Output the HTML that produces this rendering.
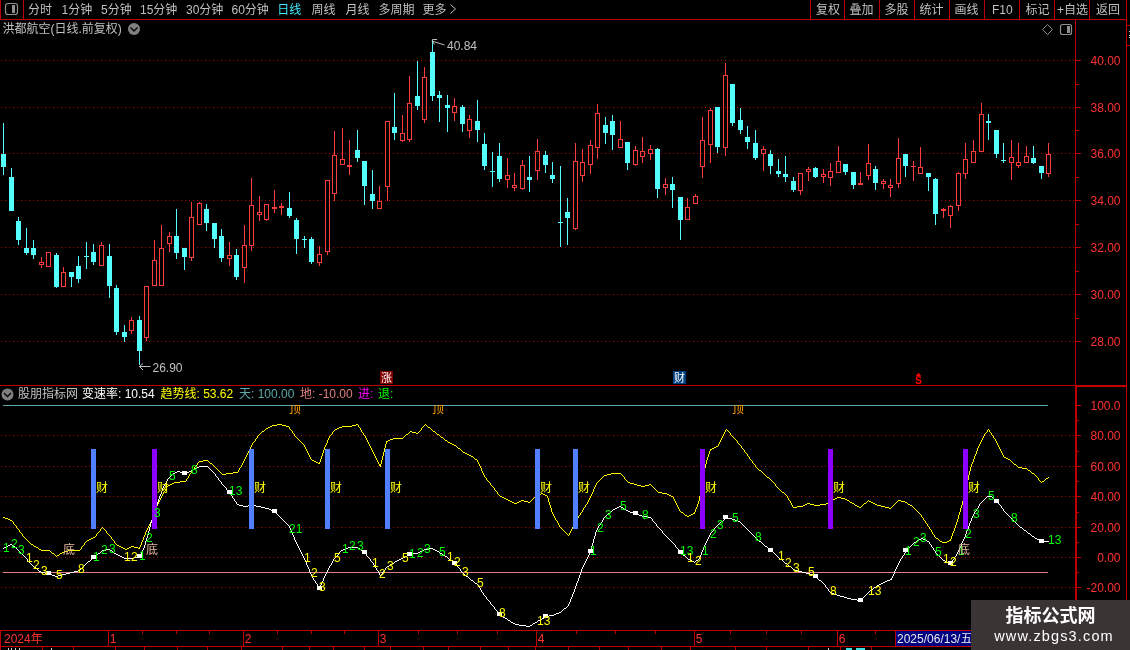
<!DOCTYPE html>
<html lang="zh"><head><meta charset="utf-8"><title>洪都航空 日线</title>
<style>html,body{margin:0;padding:0;background:#000;overflow:hidden}body{width:1130px;height:650px;position:relative}svg{position:absolute;left:0;top:0;display:block;will-change:transform}text{font-family:"Liberation Sans","Noto Sans CJK SC",sans-serif;font-size:12px;white-space:pre}.c{shape-rendering:crispEdges}</style></head><body>
<svg width="1130" height="650" viewBox="0 0 1130 650">
<rect width="1130" height="650" fill="#000"/>
<line class="c" x1="1" x2="1075" y1="60.5" y2="60.5" stroke="#b40000" stroke-width="1" stroke-dasharray="1 3"/>
<line class="c" x1="1" x2="1075" y1="107.5" y2="107.5" stroke="#b40000" stroke-width="1" stroke-dasharray="1 3"/>
<line class="c" x1="1" x2="1075" y1="153.5" y2="153.5" stroke="#b40000" stroke-width="1" stroke-dasharray="1 3"/>
<line class="c" x1="1" x2="1075" y1="200.5" y2="200.5" stroke="#b40000" stroke-width="1" stroke-dasharray="1 3"/>
<line class="c" x1="1" x2="1075" y1="247.5" y2="247.5" stroke="#b40000" stroke-width="1" stroke-dasharray="1 3"/>
<line class="c" x1="1" x2="1075" y1="294.5" y2="294.5" stroke="#b40000" stroke-width="1" stroke-dasharray="1 3"/>
<line class="c" x1="1" x2="1075" y1="341.5" y2="341.5" stroke="#b40000" stroke-width="1" stroke-dasharray="1 3"/>
<line class="c" x1="1" x2="1075" y1="435.5" y2="435.5" stroke="#b40000" stroke-width="1" stroke-dasharray="1 3"/>
<line class="c" x1="1" x2="1075" y1="466.5" y2="466.5" stroke="#b40000" stroke-width="1" stroke-dasharray="1 3"/>
<line class="c" x1="1" x2="1075" y1="496.5" y2="496.5" stroke="#b40000" stroke-width="1" stroke-dasharray="1 3"/>
<line class="c" x1="1" x2="1075" y1="527.5" y2="527.5" stroke="#b40000" stroke-width="1" stroke-dasharray="1 3"/>
<line class="c" x1="1" x2="1075" y1="557.5" y2="557.5" stroke="#b40000" stroke-width="1" stroke-dasharray="1 3"/>
<line class="c" x1="1" x2="1075" y1="587.5" y2="587.5" stroke="#b40000" stroke-width="1" stroke-dasharray="1 3"/>
<!--CANDLES-->
<rect class="c" x="3" y="123" width="1" height="52" fill="#54ffff"/>
<rect class="c" x="1" y="154" width="5" height="13" fill="#54ffff"/>
<rect class="c" x="11" y="168" width="1" height="43" fill="#54ffff"/>
<rect class="c" x="9" y="177" width="5" height="34" fill="#54ffff"/>
<rect class="c" x="18" y="217" width="1" height="28" fill="#54ffff"/>
<rect class="c" x="16" y="221" width="5" height="19" fill="#54ffff"/>
<rect class="c" x="26" y="228" width="1" height="27" fill="#54ffff"/>
<rect class="c" x="24" y="248" width="5" height="5" fill="#54ffff"/>
<rect class="c" x="33" y="240" width="1" height="19" fill="#54ffff"/>
<rect class="c" x="31" y="248" width="5" height="7" fill="#54ffff"/>
<rect class="c" x="41" y="257" width="1" height="5" fill="#ff3c3c"/>
<rect class="c" x="41" y="265" width="1" height="3" fill="#ff3c3c"/>
<rect class="c" x="39.5" y="262.5" width="4" height="2" fill="none" stroke="#ff3c3c" stroke-width="1"/>
<rect class="c" x="46.5" y="252.5" width="4" height="14" fill="none" stroke="#ff3c3c" stroke-width="1"/>
<rect class="c" x="56" y="253" width="1" height="35" fill="#54ffff"/>
<rect class="c" x="54" y="255" width="5" height="32" fill="#54ffff"/>
<rect class="c" x="63" y="267" width="1" height="5" fill="#ff3c3c"/>
<rect class="c" x="61.5" y="272.5" width="4" height="14" fill="none" stroke="#ff3c3c" stroke-width="1"/>
<rect class="c" x="71" y="272" width="1" height="15" fill="#54ffff"/>
<rect class="c" x="69" y="272" width="5" height="5" fill="#54ffff"/>
<rect class="c" x="78" y="256" width="1" height="27" fill="#54ffff"/>
<rect class="c" x="76" y="266" width="5" height="13" fill="#54ffff"/>
<rect class="c" x="86" y="242" width="1" height="27" fill="#54ffff"/>
<rect class="c" x="84" y="256" width="5" height="1" fill="#54ffff"/>
<rect class="c" x="93" y="244" width="1" height="21" fill="#54ffff"/>
<rect class="c" x="91" y="252" width="5" height="10" fill="#54ffff"/>
<rect class="c" x="101" y="242" width="1" height="3" fill="#ff3c3c"/>
<rect class="c" x="99.5" y="245.5" width="4" height="20" fill="none" stroke="#ff3c3c" stroke-width="1"/>
<rect class="c" x="109" y="244" width="1" height="54" fill="#54ffff"/>
<rect class="c" x="107" y="256" width="5" height="30" fill="#54ffff"/>
<rect class="c" x="116" y="285" width="1" height="50" fill="#54ffff"/>
<rect class="c" x="114" y="288" width="5" height="44" fill="#54ffff"/>
<rect class="c" x="124" y="325" width="1" height="17" fill="#54ffff"/>
<rect class="c" x="122" y="332" width="5" height="5" fill="#54ffff"/>
<rect class="c" x="131" y="317" width="1" height="3" fill="#ff3c3c"/>
<rect class="c" x="131" y="331" width="1" height="3" fill="#ff3c3c"/>
<rect class="c" x="129.5" y="320.5" width="4" height="10" fill="none" stroke="#ff3c3c" stroke-width="1"/>
<rect class="c" x="139" y="316" width="1" height="49" fill="#54ffff"/>
<rect class="c" x="137" y="320" width="5" height="31" fill="#54ffff"/>
<rect class="c" x="146" y="338" width="1" height="3" fill="#ff3c3c"/>
<rect class="c" x="144.5" y="286.5" width="4" height="51" fill="none" stroke="#ff3c3c" stroke-width="1"/>
<rect class="c" x="154" y="240" width="1" height="20" fill="#ff3c3c"/>
<rect class="c" x="152.5" y="260.5" width="4" height="25" fill="none" stroke="#ff3c3c" stroke-width="1"/>
<rect class="c" x="161" y="225" width="1" height="23" fill="#ff3c3c"/>
<rect class="c" x="159.5" y="248.5" width="4" height="37" fill="none" stroke="#ff3c3c" stroke-width="1"/>
<rect class="c" x="169" y="232" width="1" height="4" fill="#ff3c3c"/>
<rect class="c" x="169" y="244" width="1" height="8" fill="#ff3c3c"/>
<rect class="c" x="167.5" y="236.5" width="4" height="7" fill="none" stroke="#ff3c3c" stroke-width="1"/>
<rect class="c" x="176" y="209" width="1" height="50" fill="#54ffff"/>
<rect class="c" x="174" y="236" width="5" height="17" fill="#54ffff"/>
<rect class="c" x="184" y="248" width="1" height="22" fill="#54ffff"/>
<rect class="c" x="182" y="248" width="5" height="9" fill="#54ffff"/>
<rect class="c" x="191" y="202" width="1" height="15" fill="#ff3c3c"/>
<rect class="c" x="191" y="258" width="1" height="3" fill="#ff3c3c"/>
<rect class="c" x="189.5" y="217.5" width="4" height="40" fill="none" stroke="#ff3c3c" stroke-width="1"/>
<rect class="c" x="199" y="202" width="1" height="1" fill="#ff3c3c"/>
<rect class="c" x="197.5" y="203.5" width="4" height="21" fill="none" stroke="#ff3c3c" stroke-width="1"/>
<rect class="c" x="206" y="204" width="1" height="27" fill="#54ffff"/>
<rect class="c" x="204" y="209" width="5" height="14" fill="#54ffff"/>
<rect class="c" x="214" y="223" width="1" height="25" fill="#54ffff"/>
<rect class="c" x="212" y="223" width="5" height="16" fill="#54ffff"/>
<rect class="c" x="221" y="229" width="1" height="33" fill="#54ffff"/>
<rect class="c" x="219" y="236" width="5" height="22" fill="#54ffff"/>
<rect class="c" x="229" y="242" width="1" height="13" fill="#ff3c3c"/>
<rect class="c" x="229" y="259" width="1" height="7" fill="#ff3c3c"/>
<rect class="c" x="227.5" y="255.5" width="4" height="3" fill="none" stroke="#ff3c3c" stroke-width="1"/>
<rect class="c" x="236" y="249" width="1" height="31" fill="#54ffff"/>
<rect class="c" x="234" y="255" width="5" height="22" fill="#54ffff"/>
<rect class="c" x="244" y="225" width="1" height="20" fill="#ff3c3c"/>
<rect class="c" x="244" y="268" width="1" height="15" fill="#ff3c3c"/>
<rect class="c" x="242.5" y="245.5" width="4" height="22" fill="none" stroke="#ff3c3c" stroke-width="1"/>
<rect class="c" x="251" y="178" width="1" height="27" fill="#ff3c3c"/>
<rect class="c" x="251" y="246" width="1" height="5" fill="#ff3c3c"/>
<rect class="c" x="249.5" y="205.5" width="4" height="40" fill="none" stroke="#ff3c3c" stroke-width="1"/>
<rect class="c" x="259" y="196" width="1" height="16" fill="#ff3c3c"/>
<rect class="c" x="259" y="215" width="1" height="6" fill="#ff3c3c"/>
<rect class="c" x="257.5" y="212.5" width="4" height="2" fill="none" stroke="#ff3c3c" stroke-width="1"/>
<rect class="c" x="266" y="220" width="1" height="1" fill="#ff3c3c"/>
<rect class="c" x="264.5" y="204.5" width="4" height="15" fill="none" stroke="#ff3c3c" stroke-width="1"/>
<rect class="c" x="274" y="190" width="1" height="23" fill="#ff3c3c"/>
<rect class="c" x="272" y="207" width="5" height="2" fill="#ff3c3c"/>
<rect class="c" x="281" y="203" width="1" height="12" fill="#ff3c3c"/>
<rect class="c" x="279" y="206" width="5" height="2" fill="#ff3c3c"/>
<rect class="c" x="289" y="192" width="1" height="26" fill="#54ffff"/>
<rect class="c" x="287" y="208" width="5" height="8" fill="#54ffff"/>
<rect class="c" x="296" y="218" width="1" height="36" fill="#54ffff"/>
<rect class="c" x="294" y="220" width="5" height="19" fill="#54ffff"/>
<rect class="c" x="304" y="236" width="1" height="12" fill="#54ffff"/>
<rect class="c" x="302" y="239" width="5" height="1" fill="#54ffff"/>
<rect class="c" x="311" y="237" width="1" height="27" fill="#54ffff"/>
<rect class="c" x="309" y="239" width="5" height="23" fill="#54ffff"/>
<rect class="c" x="319" y="246" width="1" height="8" fill="#ff3c3c"/>
<rect class="c" x="319" y="263" width="1" height="3" fill="#ff3c3c"/>
<rect class="c" x="317.5" y="254.5" width="4" height="8" fill="none" stroke="#ff3c3c" stroke-width="1"/>
<rect class="c" x="327" y="252" width="1" height="3" fill="#ff3c3c"/>
<rect class="c" x="325.5" y="180.5" width="4" height="71" fill="none" stroke="#ff3c3c" stroke-width="1"/>
<rect class="c" x="334" y="131" width="1" height="24" fill="#ff3c3c"/>
<rect class="c" x="334" y="194" width="1" height="7" fill="#ff3c3c"/>
<rect class="c" x="332.5" y="155.5" width="4" height="38" fill="none" stroke="#ff3c3c" stroke-width="1"/>
<rect class="c" x="342" y="128" width="1" height="31" fill="#ff3c3c"/>
<rect class="c" x="340.5" y="159.5" width="4" height="5" fill="none" stroke="#ff3c3c" stroke-width="1"/>
<rect class="c" x="349" y="140" width="1" height="35" fill="#ff3c3c"/>
<rect class="c" x="347" y="165" width="5" height="2" fill="#ff3c3c"/>
<rect class="c" x="357" y="130" width="1" height="32" fill="#54ffff"/>
<rect class="c" x="355" y="150" width="5" height="8" fill="#54ffff"/>
<rect class="c" x="364" y="161" width="1" height="44" fill="#54ffff"/>
<rect class="c" x="362" y="161" width="5" height="25" fill="#54ffff"/>
<rect class="c" x="372" y="170" width="1" height="39" fill="#54ffff"/>
<rect class="c" x="370" y="194" width="5" height="7" fill="#54ffff"/>
<rect class="c" x="379" y="186" width="1" height="15" fill="#ff3c3c"/>
<rect class="c" x="377.5" y="201.5" width="4" height="7" fill="none" stroke="#ff3c3c" stroke-width="1"/>
<rect class="c" x="387" y="187" width="1" height="14" fill="#ff3c3c"/>
<rect class="c" x="385.5" y="121.5" width="4" height="65" fill="none" stroke="#ff3c3c" stroke-width="1"/>
<rect class="c" x="394" y="93" width="1" height="47" fill="#54ffff"/>
<rect class="c" x="392" y="127" width="5" height="6" fill="#54ffff"/>
<rect class="c" x="402" y="115" width="1" height="18" fill="#ff3c3c"/>
<rect class="c" x="402" y="141" width="1" height="1" fill="#ff3c3c"/>
<rect class="c" x="400.5" y="133.5" width="4" height="7" fill="none" stroke="#ff3c3c" stroke-width="1"/>
<rect class="c" x="409" y="76" width="1" height="27" fill="#ff3c3c"/>
<rect class="c" x="409" y="140" width="1" height="2" fill="#ff3c3c"/>
<rect class="c" x="407.5" y="103.5" width="4" height="36" fill="none" stroke="#ff3c3c" stroke-width="1"/>
<rect class="c" x="417" y="61" width="1" height="49" fill="#54ffff"/>
<rect class="c" x="415" y="96" width="5" height="10" fill="#54ffff"/>
<rect class="c" x="424" y="67" width="1" height="10" fill="#ff3c3c"/>
<rect class="c" x="424" y="120" width="1" height="3" fill="#ff3c3c"/>
<rect class="c" x="422.5" y="77.5" width="4" height="42" fill="none" stroke="#ff3c3c" stroke-width="1"/>
<rect class="c" x="432" y="40" width="1" height="61" fill="#54ffff"/>
<rect class="c" x="430" y="52" width="5" height="44" fill="#54ffff"/>
<rect class="c" x="439" y="91" width="1" height="31" fill="#54ffff"/>
<rect class="c" x="437" y="95" width="5" height="3" fill="#54ffff"/>
<rect class="c" x="447" y="95" width="1" height="37" fill="#54ffff"/>
<rect class="c" x="445" y="105" width="5" height="3" fill="#54ffff"/>
<rect class="c" x="454" y="98" width="1" height="8" fill="#ff3c3c"/>
<rect class="c" x="454" y="113" width="1" height="8" fill="#ff3c3c"/>
<rect class="c" x="452.5" y="106.5" width="4" height="6" fill="none" stroke="#ff3c3c" stroke-width="1"/>
<rect class="c" x="462" y="105" width="1" height="27" fill="#54ffff"/>
<rect class="c" x="460" y="107" width="5" height="17" fill="#54ffff"/>
<rect class="c" x="469" y="115" width="1" height="4" fill="#ff3c3c"/>
<rect class="c" x="469" y="131" width="1" height="7" fill="#ff3c3c"/>
<rect class="c" x="467.5" y="119.5" width="4" height="11" fill="none" stroke="#ff3c3c" stroke-width="1"/>
<rect class="c" x="477" y="100" width="1" height="42" fill="#54ffff"/>
<rect class="c" x="475" y="121" width="5" height="9" fill="#54ffff"/>
<rect class="c" x="484" y="133" width="1" height="37" fill="#54ffff"/>
<rect class="c" x="482" y="144" width="5" height="22" fill="#54ffff"/>
<rect class="c" x="492" y="152" width="1" height="35" fill="#54ffff"/>
<rect class="c" x="490" y="171" width="5" height="1" fill="#54ffff"/>
<rect class="c" x="499" y="143" width="1" height="39" fill="#54ffff"/>
<rect class="c" x="497" y="156" width="5" height="23" fill="#54ffff"/>
<rect class="c" x="507" y="158" width="1" height="17" fill="#ff3c3c"/>
<rect class="c" x="507" y="180" width="1" height="8" fill="#ff3c3c"/>
<rect class="c" x="505.5" y="175.5" width="4" height="4" fill="none" stroke="#ff3c3c" stroke-width="1"/>
<rect class="c" x="514" y="173" width="1" height="12" fill="#ff3c3c"/>
<rect class="c" x="514" y="188" width="1" height="3" fill="#ff3c3c"/>
<rect class="c" x="512.5" y="185.5" width="4" height="2" fill="none" stroke="#ff3c3c" stroke-width="1"/>
<rect class="c" x="522" y="160" width="1" height="5" fill="#ff3c3c"/>
<rect class="c" x="522" y="189" width="1" height="1" fill="#ff3c3c"/>
<rect class="c" x="520.5" y="165.5" width="4" height="23" fill="none" stroke="#ff3c3c" stroke-width="1"/>
<rect class="c" x="529" y="156" width="1" height="36" fill="#54ffff"/>
<rect class="c" x="527" y="177" width="5" height="3" fill="#54ffff"/>
<rect class="c" x="537" y="139" width="1" height="12" fill="#ff3c3c"/>
<rect class="c" x="537" y="171" width="1" height="9" fill="#ff3c3c"/>
<rect class="c" x="535.5" y="151.5" width="4" height="19" fill="none" stroke="#ff3c3c" stroke-width="1"/>
<rect class="c" x="545" y="151" width="1" height="22" fill="#54ffff"/>
<rect class="c" x="543" y="155" width="5" height="10" fill="#54ffff"/>
<rect class="c" x="552" y="162" width="1" height="21" fill="#54ffff"/>
<rect class="c" x="550" y="175" width="5" height="4" fill="#54ffff"/>
<rect class="c" x="560" y="166" width="1" height="81" fill="#54ffff"/>
<rect class="c" x="558" y="222" width="5" height="1" fill="#54ffff"/>
<rect class="c" x="567" y="198" width="1" height="47" fill="#54ffff"/>
<rect class="c" x="565" y="212" width="5" height="6" fill="#54ffff"/>
<rect class="c" x="575" y="143" width="1" height="18" fill="#ff3c3c"/>
<rect class="c" x="575" y="229" width="1" height="1" fill="#ff3c3c"/>
<rect class="c" x="573.5" y="161.5" width="4" height="67" fill="none" stroke="#ff3c3c" stroke-width="1"/>
<rect class="c" x="582" y="149" width="1" height="13" fill="#ff3c3c"/>
<rect class="c" x="582" y="176" width="1" height="6" fill="#ff3c3c"/>
<rect class="c" x="580.5" y="162.5" width="4" height="13" fill="none" stroke="#ff3c3c" stroke-width="1"/>
<rect class="c" x="590" y="140" width="1" height="5" fill="#ff3c3c"/>
<rect class="c" x="590" y="165" width="1" height="9" fill="#ff3c3c"/>
<rect class="c" x="588.5" y="145.5" width="4" height="19" fill="none" stroke="#ff3c3c" stroke-width="1"/>
<rect class="c" x="597" y="104" width="1" height="9" fill="#ff3c3c"/>
<rect class="c" x="597" y="148" width="1" height="11" fill="#ff3c3c"/>
<rect class="c" x="595.5" y="113.5" width="4" height="34" fill="none" stroke="#ff3c3c" stroke-width="1"/>
<rect class="c" x="605" y="117" width="1" height="27" fill="#54ffff"/>
<rect class="c" x="603" y="125" width="5" height="8" fill="#54ffff"/>
<rect class="c" x="612" y="115" width="1" height="35" fill="#54ffff"/>
<rect class="c" x="610" y="121" width="5" height="14" fill="#54ffff"/>
<rect class="c" x="620" y="121" width="1" height="18" fill="#ff3c3c"/>
<rect class="c" x="618.5" y="139.5" width="4" height="8" fill="none" stroke="#ff3c3c" stroke-width="1"/>
<rect class="c" x="627" y="142" width="1" height="28" fill="#54ffff"/>
<rect class="c" x="625" y="142" width="5" height="21" fill="#54ffff"/>
<rect class="c" x="635" y="146" width="1" height="4" fill="#ff3c3c"/>
<rect class="c" x="635" y="165" width="1" height="1" fill="#ff3c3c"/>
<rect class="c" x="633.5" y="150.5" width="4" height="14" fill="none" stroke="#ff3c3c" stroke-width="1"/>
<rect class="c" x="642" y="137" width="1" height="14" fill="#ff3c3c"/>
<rect class="c" x="642" y="157" width="1" height="6" fill="#ff3c3c"/>
<rect class="c" x="640.5" y="151.5" width="4" height="5" fill="none" stroke="#ff3c3c" stroke-width="1"/>
<rect class="c" x="650" y="145" width="1" height="4" fill="#ff3c3c"/>
<rect class="c" x="650" y="154" width="1" height="6" fill="#ff3c3c"/>
<rect class="c" x="648.5" y="149.5" width="4" height="4" fill="none" stroke="#ff3c3c" stroke-width="1"/>
<rect class="c" x="657" y="148" width="1" height="50" fill="#54ffff"/>
<rect class="c" x="655" y="149" width="5" height="40" fill="#54ffff"/>
<rect class="c" x="665" y="178" width="1" height="6" fill="#ff3c3c"/>
<rect class="c" x="665" y="188" width="1" height="7" fill="#ff3c3c"/>
<rect class="c" x="663.5" y="184.5" width="4" height="3" fill="none" stroke="#ff3c3c" stroke-width="1"/>
<rect class="c" x="672" y="177" width="1" height="31" fill="#54ffff"/>
<rect class="c" x="670" y="184" width="5" height="6" fill="#54ffff"/>
<rect class="c" x="680" y="197" width="1" height="43" fill="#54ffff"/>
<rect class="c" x="678" y="197" width="5" height="23" fill="#54ffff"/>
<rect class="c" x="687" y="198" width="1" height="9" fill="#ff3c3c"/>
<rect class="c" x="685.5" y="207.5" width="4" height="12" fill="none" stroke="#ff3c3c" stroke-width="1"/>
<rect class="c" x="695" y="194" width="1" height="2" fill="#ff3c3c"/>
<rect class="c" x="693.5" y="196.5" width="4" height="7" fill="none" stroke="#ff3c3c" stroke-width="1"/>
<rect class="c" x="702" y="117" width="1" height="23" fill="#ff3c3c"/>
<rect class="c" x="702" y="167" width="1" height="11" fill="#ff3c3c"/>
<rect class="c" x="700.5" y="140.5" width="4" height="26" fill="none" stroke="#ff3c3c" stroke-width="1"/>
<rect class="c" x="710" y="108" width="1" height="2" fill="#ff3c3c"/>
<rect class="c" x="710" y="145" width="1" height="18" fill="#ff3c3c"/>
<rect class="c" x="708.5" y="110.5" width="4" height="34" fill="none" stroke="#ff3c3c" stroke-width="1"/>
<rect class="c" x="717" y="107" width="1" height="46" fill="#54ffff"/>
<rect class="c" x="715" y="107" width="5" height="40" fill="#54ffff"/>
<rect class="c" x="725" y="63" width="1" height="12" fill="#ff3c3c"/>
<rect class="c" x="725" y="148" width="1" height="8" fill="#ff3c3c"/>
<rect class="c" x="723.5" y="75.5" width="4" height="72" fill="none" stroke="#ff3c3c" stroke-width="1"/>
<rect class="c" x="732" y="84" width="1" height="42" fill="#54ffff"/>
<rect class="c" x="730" y="84" width="5" height="39" fill="#54ffff"/>
<rect class="c" x="740" y="108" width="1" height="26" fill="#54ffff"/>
<rect class="c" x="738" y="120" width="5" height="10" fill="#54ffff"/>
<rect class="c" x="747" y="126" width="1" height="23" fill="#54ffff"/>
<rect class="c" x="745" y="137" width="5" height="5" fill="#54ffff"/>
<rect class="c" x="755" y="130" width="1" height="30" fill="#54ffff"/>
<rect class="c" x="753" y="143" width="5" height="15" fill="#54ffff"/>
<rect class="c" x="763" y="146" width="1" height="3" fill="#ff3c3c"/>
<rect class="c" x="763" y="154" width="1" height="17" fill="#ff3c3c"/>
<rect class="c" x="761.5" y="149.5" width="4" height="4" fill="none" stroke="#ff3c3c" stroke-width="1"/>
<rect class="c" x="770" y="150" width="1" height="24" fill="#54ffff"/>
<rect class="c" x="768" y="154" width="5" height="12" fill="#54ffff"/>
<rect class="c" x="778" y="159" width="1" height="18" fill="#54ffff"/>
<rect class="c" x="776" y="171" width="5" height="3" fill="#54ffff"/>
<rect class="c" x="785" y="156" width="1" height="26" fill="#54ffff"/>
<rect class="c" x="783" y="174" width="5" height="3" fill="#54ffff"/>
<rect class="c" x="793" y="177" width="1" height="15" fill="#54ffff"/>
<rect class="c" x="791" y="181" width="5" height="9" fill="#54ffff"/>
<rect class="c" x="800" y="191" width="1" height="4" fill="#ff3c3c"/>
<rect class="c" x="798.5" y="173.5" width="4" height="17" fill="none" stroke="#ff3c3c" stroke-width="1"/>
<rect class="c" x="808" y="167" width="1" height="2" fill="#ff3c3c"/>
<rect class="c" x="808" y="172" width="1" height="9" fill="#ff3c3c"/>
<rect class="c" x="806.5" y="169.5" width="4" height="2" fill="none" stroke="#ff3c3c" stroke-width="1"/>
<rect class="c" x="815" y="167" width="1" height="11" fill="#54ffff"/>
<rect class="c" x="813" y="168" width="5" height="9" fill="#54ffff"/>
<rect class="c" x="823" y="169" width="1" height="5" fill="#ff3c3c"/>
<rect class="c" x="823" y="177" width="1" height="6" fill="#ff3c3c"/>
<rect class="c" x="821.5" y="174.5" width="4" height="2" fill="none" stroke="#ff3c3c" stroke-width="1"/>
<rect class="c" x="830" y="163" width="1" height="8" fill="#ff3c3c"/>
<rect class="c" x="830" y="178" width="1" height="8" fill="#ff3c3c"/>
<rect class="c" x="828.5" y="171.5" width="4" height="6" fill="none" stroke="#ff3c3c" stroke-width="1"/>
<rect class="c" x="838" y="146" width="1" height="15" fill="#ff3c3c"/>
<rect class="c" x="836.5" y="161.5" width="4" height="11" fill="none" stroke="#ff3c3c" stroke-width="1"/>
<rect class="c" x="845" y="164" width="1" height="11" fill="#54ffff"/>
<rect class="c" x="843" y="164" width="5" height="8" fill="#54ffff"/>
<rect class="c" x="853" y="172" width="1" height="17" fill="#54ffff"/>
<rect class="c" x="851" y="172" width="5" height="13" fill="#54ffff"/>
<rect class="c" x="860" y="172" width="1" height="13" fill="#ff3c3c"/>
<rect class="c" x="858" y="183" width="5" height="2" fill="#ff3c3c"/>
<rect class="c" x="868" y="144" width="1" height="19" fill="#ff3c3c"/>
<rect class="c" x="868" y="176" width="1" height="4" fill="#ff3c3c"/>
<rect class="c" x="866.5" y="163.5" width="4" height="12" fill="none" stroke="#ff3c3c" stroke-width="1"/>
<rect class="c" x="875" y="166" width="1" height="24" fill="#54ffff"/>
<rect class="c" x="873" y="169" width="5" height="14" fill="#54ffff"/>
<rect class="c" x="883" y="179" width="1" height="2" fill="#ff3c3c"/>
<rect class="c" x="883" y="184" width="1" height="5" fill="#ff3c3c"/>
<rect class="c" x="881.5" y="181.5" width="4" height="2" fill="none" stroke="#ff3c3c" stroke-width="1"/>
<rect class="c" x="890" y="179" width="1" height="6" fill="#ff3c3c"/>
<rect class="c" x="890" y="188" width="1" height="9" fill="#ff3c3c"/>
<rect class="c" x="888.5" y="185.5" width="4" height="2" fill="none" stroke="#ff3c3c" stroke-width="1"/>
<rect class="c" x="898" y="138" width="1" height="20" fill="#ff3c3c"/>
<rect class="c" x="898" y="184" width="1" height="4" fill="#ff3c3c"/>
<rect class="c" x="896.5" y="158.5" width="4" height="25" fill="none" stroke="#ff3c3c" stroke-width="1"/>
<rect class="c" x="905" y="154" width="1" height="23" fill="#54ffff"/>
<rect class="c" x="903" y="154" width="5" height="12" fill="#54ffff"/>
<rect class="c" x="913" y="161" width="1" height="20" fill="#ff3c3c"/>
<rect class="c" x="911" y="166" width="5" height="1" fill="#ff3c3c"/>
<rect class="c" x="920" y="147" width="1" height="20" fill="#ff3c3c"/>
<rect class="c" x="918.5" y="167.5" width="4" height="6" fill="none" stroke="#ff3c3c" stroke-width="1"/>
<rect class="c" x="928" y="173" width="1" height="18" fill="#54ffff"/>
<rect class="c" x="926" y="173" width="5" height="4" fill="#54ffff"/>
<rect class="c" x="935" y="178" width="1" height="47" fill="#54ffff"/>
<rect class="c" x="933" y="179" width="5" height="35" fill="#54ffff"/>
<rect class="c" x="943" y="208" width="1" height="10" fill="#ff3c3c"/>
<rect class="c" x="941" y="209" width="5" height="2" fill="#ff3c3c"/>
<rect class="c" x="950" y="205" width="1" height="1" fill="#ff3c3c"/>
<rect class="c" x="950" y="216" width="1" height="12" fill="#ff3c3c"/>
<rect class="c" x="948.5" y="206.5" width="4" height="9" fill="none" stroke="#ff3c3c" stroke-width="1"/>
<rect class="c" x="958" y="172" width="1" height="1" fill="#ff3c3c"/>
<rect class="c" x="958" y="206" width="1" height="5" fill="#ff3c3c"/>
<rect class="c" x="956.5" y="173.5" width="4" height="32" fill="none" stroke="#ff3c3c" stroke-width="1"/>
<rect class="c" x="965" y="143" width="1" height="16" fill="#ff3c3c"/>
<rect class="c" x="965" y="174" width="1" height="5" fill="#ff3c3c"/>
<rect class="c" x="963.5" y="159.5" width="4" height="14" fill="none" stroke="#ff3c3c" stroke-width="1"/>
<rect class="c" x="973" y="140" width="1" height="11" fill="#ff3c3c"/>
<rect class="c" x="971.5" y="151.5" width="4" height="11" fill="none" stroke="#ff3c3c" stroke-width="1"/>
<rect class="c" x="981" y="103" width="1" height="11" fill="#ff3c3c"/>
<rect class="c" x="979.5" y="114.5" width="4" height="37" fill="none" stroke="#ff3c3c" stroke-width="1"/>
<rect class="c" x="988" y="114" width="1" height="26" fill="#54ffff"/>
<rect class="c" x="986" y="121" width="5" height="2" fill="#54ffff"/>
<rect class="c" x="996" y="130" width="1" height="28" fill="#54ffff"/>
<rect class="c" x="994" y="130" width="5" height="24" fill="#54ffff"/>
<rect class="c" x="1003" y="143" width="1" height="20" fill="#54ffff"/>
<rect class="c" x="1001" y="160" width="5" height="1" fill="#54ffff"/>
<rect class="c" x="1011" y="140" width="1" height="17" fill="#ff3c3c"/>
<rect class="c" x="1011" y="163" width="1" height="17" fill="#ff3c3c"/>
<rect class="c" x="1009.5" y="157.5" width="4" height="5" fill="none" stroke="#ff3c3c" stroke-width="1"/>
<rect class="c" x="1018" y="143" width="1" height="19" fill="#ff3c3c"/>
<rect class="c" x="1018" y="166" width="1" height="2" fill="#ff3c3c"/>
<rect class="c" x="1016.5" y="162.5" width="4" height="3" fill="none" stroke="#ff3c3c" stroke-width="1"/>
<rect class="c" x="1026" y="146" width="1" height="10" fill="#ff3c3c"/>
<rect class="c" x="1024.5" y="156.5" width="4" height="6" fill="none" stroke="#ff3c3c" stroke-width="1"/>
<rect class="c" x="1033" y="146" width="1" height="18" fill="#54ffff"/>
<rect class="c" x="1031" y="158" width="5" height="5" fill="#54ffff"/>
<rect class="c" x="1041" y="166" width="1" height="13" fill="#54ffff"/>
<rect class="c" x="1039" y="166" width="5" height="7" fill="#54ffff"/>
<rect class="c" x="1048" y="143" width="1" height="11" fill="#ff3c3c"/>
<rect class="c" x="1048" y="174" width="1" height="3" fill="#ff3c3c"/>
<rect class="c" x="1046.5" y="154.5" width="4" height="19" fill="none" stroke="#ff3c3c" stroke-width="1"/>
<!--/CANDLES-->
<path d="M444.5 45L432.5 41.2M437 39.5h-4.5l-.3 1.7l2.3 3.3" stroke="#c0c0c0" fill="none" stroke-width="1"/>
<text x="447" y="50" fill="#c0c0c0">40.84</text>
<path d="M139 366.5h11.5M139.5 366.5l3.5 -3M139.5 366.5l3.5 3.5" stroke="#c0c0c0" fill="none" stroke-width="1"/>
<text x="152.5" y="372" fill="#c0c0c0">26.90</text>
<rect class="c" x="380" y="371" width="13" height="13" fill="#800000"/>
<text x="381" y="382.4" fill="#ffffff" style="font-size:11px">涨</text>
<rect class="c" x="673" y="371" width="13" height="13" fill="#003f7f"/>
<text x="674" y="382.4" fill="#ffffff" style="font-size:11px">财</text>
<text x="915.3" y="384" fill="#ff0000" style="font-size:10px" font-weight="bold">S</text>
<path d="M915.8 376h5.4l-2.7 -3.2z" fill="#ff0000"/>
<rect class="c" x="0" y="19" width="1127" height="1" fill="#c00000"/>
<rect class="c" x="0" y="0" width="1" height="20" fill="#c00000"/>
<rect class="c" x="23" y="0" width="1" height="20" fill="#c00000"/>
<rect class="c" x="810" y="0" width="1" height="20" fill="#c00000"/>
<rect class="c" x="844" y="0" width="1" height="20" fill="#c00000"/>
<rect class="c" x="879" y="0" width="1" height="20" fill="#c00000"/>
<rect class="c" x="914" y="0" width="1" height="20" fill="#c00000"/>
<rect class="c" x="949" y="0" width="1" height="20" fill="#c00000"/>
<rect class="c" x="984" y="0" width="1" height="20" fill="#c00000"/>
<rect class="c" x="1019" y="0" width="1" height="20" fill="#c00000"/>
<rect class="c" x="1054" y="0" width="1" height="20" fill="#c00000"/>
<rect class="c" x="1089" y="0" width="1" height="20" fill="#c00000"/>
<rect class="c" x="1126" y="0" width="1" height="650" fill="#c00000"/>
<rect class="c" x="1075" y="20" width="1" height="366" fill="#c00000"/>
<rect class="c" x="1075" y="386" width="2" height="244" fill="#c00000"/>
<rect class="c" x="0" y="385" width="1075" height="1" fill="#c00000"/>
<rect class="c" x="1075" y="385" width="52" height="2" fill="#c00000"/>
<rect class="c" x="0" y="630" width="1127" height="1" fill="#c00000"/>
<rect class="c" x="0" y="646" width="1127" height="1" fill="#c00000"/>
<rect class="c" x="0" y="630" width="1" height="20" fill="#c00000"/>
<rect class="c" x="1076" y="60" width="5" height="1" fill="#c00000"/>
<text x="1090.5" y="64.5" fill="#ff3232">40.00</text>
<rect class="c" x="1076" y="107" width="5" height="1" fill="#c00000"/>
<text x="1090.5" y="111.5" fill="#ff3232">38.00</text>
<rect class="c" x="1076" y="153" width="5" height="1" fill="#c00000"/>
<text x="1090.5" y="157.5" fill="#ff3232">36.00</text>
<rect class="c" x="1076" y="200" width="5" height="1" fill="#c00000"/>
<text x="1090.5" y="204.5" fill="#ff3232">34.00</text>
<rect class="c" x="1076" y="247" width="5" height="1" fill="#c00000"/>
<text x="1090.5" y="251.5" fill="#ff3232">32.00</text>
<rect class="c" x="1076" y="294" width="5" height="1" fill="#c00000"/>
<text x="1090.5" y="298.5" fill="#ff3232">30.00</text>
<rect class="c" x="1076" y="341" width="5" height="1" fill="#c00000"/>
<text x="1090.5" y="345.5" fill="#ff3232">28.00</text>
<rect class="c" x="1076" y="84" width="3" height="1" fill="#c00000"/>
<rect class="c" x="1076" y="130" width="3" height="1" fill="#c00000"/>
<rect class="c" x="1076" y="177" width="3" height="1" fill="#c00000"/>
<rect class="c" x="1076" y="224" width="3" height="1" fill="#c00000"/>
<rect class="c" x="1076" y="271" width="3" height="1" fill="#c00000"/>
<rect class="c" x="1076" y="318" width="3" height="1" fill="#c00000"/>
<rect class="c" x="1077" y="405" width="4" height="1" fill="#c00000"/>
<text x="1120.5" y="409.5" fill="#ff3232" text-anchor="end">100.0</text>
<rect class="c" x="1077" y="435" width="4" height="1" fill="#c00000"/>
<text x="1120.5" y="439.5" fill="#ff3232" text-anchor="end">80.00</text>
<rect class="c" x="1077" y="466" width="4" height="1" fill="#c00000"/>
<text x="1120.5" y="470.5" fill="#ff3232" text-anchor="end">60.00</text>
<rect class="c" x="1077" y="496" width="4" height="1" fill="#c00000"/>
<text x="1120.5" y="500.5" fill="#ff3232" text-anchor="end">40.00</text>
<rect class="c" x="1077" y="527" width="4" height="1" fill="#c00000"/>
<text x="1120.5" y="531.5" fill="#ff3232" text-anchor="end">20.00</text>
<rect class="c" x="1077" y="557" width="4" height="1" fill="#c00000"/>
<text x="1120.5" y="561.5" fill="#ff3232" text-anchor="end">0.00</text>
<rect class="c" x="1077" y="587" width="4" height="1" fill="#c00000"/>
<text x="1120.5" y="591.5" fill="#ff3232" text-anchor="end">-20.00</text>
<rect class="c" x="1077" y="420" width="2" height="1" fill="#c00000"/>
<rect class="c" x="1077" y="451" width="2" height="1" fill="#c00000"/>
<rect class="c" x="1077" y="481" width="2" height="1" fill="#c00000"/>
<rect class="c" x="1077" y="512" width="2" height="1" fill="#c00000"/>
<rect class="c" x="1077" y="542" width="2" height="1" fill="#c00000"/>
<rect class="c" x="1077" y="572" width="2" height="1" fill="#c00000"/>
<rect class="c" x="1077" y="603" width="2" height="1" fill="#c00000"/>
<rect class="c" x="1077" y="618" width="2" height="1" fill="#c00000"/>
<rect x="5.5" y="3.5" width="12" height="11" rx="2.5" fill="none" stroke="#909090" stroke-width="1.2"/><rect class="c" x="12" y="5" width="3" height="8" fill="#909090"/>
<text x="28" y="13.5" fill="#c0c0c0">分时</text>
<text x="61.5" y="13.5" fill="#c0c0c0">1分钟</text>
<text x="101" y="13.5" fill="#c0c0c0">5分钟</text>
<text x="140" y="13.5" fill="#c0c0c0">15分钟</text>
<text x="186" y="13.5" fill="#c0c0c0">30分钟</text>
<text x="231.5" y="13.5" fill="#c0c0c0">60分钟</text>
<text x="277.2" y="13.5" fill="#40e8ff">日线</text>
<text x="311.5" y="13.5" fill="#c0c0c0">周线</text>
<text x="345.5" y="13.5" fill="#c0c0c0">月线</text>
<text x="378.5" y="13.5" fill="#c0c0c0">多周期</text>
<text x="422.5" y="13.5" fill="#c0c0c0">更多</text>
<path d="M450.5 4.5l5 4.5l-5 4.5" stroke="#c0c0c0" fill="none"/>
<text x="816" y="13.5" fill="#c0c0c0">复权</text>
<text x="849.5" y="13.5" fill="#c0c0c0">叠加</text>
<text x="884.5" y="13.5" fill="#c0c0c0">多股</text>
<text x="919.5" y="13.5" fill="#c0c0c0">统计</text>
<text x="954.5" y="13.5" fill="#c0c0c0">画线</text>
<text x="992" y="13.5" fill="#c0c0c0">F10</text>
<text x="1025.5" y="13.5" fill="#c0c0c0">标记</text>
<text x="1057" y="13.5" fill="#c0c0c0">+自选</text>
<text x="1096" y="13.5" fill="#c0c0c0">返回</text>
<text x="2.5" y="33" fill="#c0c0c0">洪都航空(日线.前复权)</text>
<circle cx="134" cy="29" r="6" fill="#808080"/><path d="M130.5 27.5l3.5 3.5l3.5 -3.5" stroke="#000" fill="none" stroke-width="1.3"/>
<path d="M1047.5 24.5l5 5l-5 5l-5 -5z" stroke="#909090" fill="none"/>
<rect x="1060.5" y="24.5" width="11" height="10" rx="2" fill="none" stroke="#909090" stroke-width="1.2"/><rect class="c" x="1067" y="26" width="3" height="7" fill="#909090"/>
<circle cx="7.5" cy="394.5" r="6" fill="#808080"/><path d="M4 393l3.5 3.5l3.5 -3.5" stroke="#000" fill="none" stroke-width="1.3"/>
<text x="18" y="398.3" fill="#c0c0c0">股朋指标网</text>
<text x="82" y="398.3" fill="#ffffff">变速率: 10.54</text>
<text x="160.5" y="398.3" fill="#ffff00">趋势线: 53.62</text>
<text x="239" y="398.3" fill="#5fa8a8">天: 100.00</text>
<text x="300" y="398.3" fill="#e08080">地: -10.00</text>
<text x="358" y="398.3" fill="#ff00ff">进:</text>
<text x="378" y="398.3" fill="#00ff00">退:</text>
<rect class="c" x="3" y="405" width="1045" height="1" fill="#5fa8a8"/>
<rect class="c" x="3" y="572" width="1045" height="1" fill="#e08080"/>
<clipPath id="cp"><rect x="0" y="405" width="1075" height="225"/></clipPath>
<text x="289" y="413.2" fill="#ffa000" clip-path="url(#cp)">顶</text>
<text x="432" y="413.2" fill="#ffa000" clip-path="url(#cp)">顶</text>
<text x="732" y="413.2" fill="#ffa000" clip-path="url(#cp)">顶</text>
<path class="c" d="M3 517h2v1h-2zM5 518h3v1h-3zM8 519h2v1h-2zM10 520h2v1h-2zM31 544h2v1h-2zM34 546h2v1h-2zM36 547h2v1h-2zM39 549h2v1h-2zM41 550h9v1h-9zM52 553h2v1h-2zM57 555h2v1h-2zM60 553h2v1h-2zM62 552h2v1h-2zM64 551h4v1h-4zM68 550h12v1h-12zM87 540h2v1h-2zM89 539h2v1h-2zM91 538h2v1h-2zM93 537h2v1h-2zM117 545h2v1h-2zM119 546h2v1h-2zM121 547h2v1h-2zM123 548h2v1h-2zM125 549h2v1h-2zM127 548h2v1h-2zM129 547h2v1h-2zM131 546h3v1h-3zM134 547h4v1h-4zM138 548h2v1h-2zM168 485h2v1h-2zM170 484h2v1h-2zM172 483h2v1h-2zM174 482h6v1h-6zM180 481h6v1h-6zM199 461h4v1h-4zM203 460h5v1h-5zM210 463h2v1h-2zM222 474h4v1h-4zM226 473h7v1h-7zM233 472h5v1h-5zM262 431h2v1h-2zM266 428h2v1h-2zM268 427h2v1h-2zM270 426h2v1h-2zM272 425h5v1h-5zM277 424h5v1h-5zM282 425h4v1h-4zM286 426h3v1h-3zM312 460h2v1h-2zM314 461h2v1h-2zM316 462h2v1h-2zM318 463h2v1h-2zM335 429h2v1h-2zM337 428h2v1h-2zM339 427h3v1h-3zM342 426h10v1h-10zM352 425h4v1h-4zM356 424h2v1h-2zM379 464h2v1h-2zM379 465h2v1h-2zM386 441h2v1h-2zM388 440h2v1h-2zM390 439h3v1h-3zM393 438h10v1h-10zM406 434h2v1h-2zM410 431h2v1h-2zM412 432h4v1h-4zM416 433h2v1h-2zM428 427h2v1h-2zM433 431h2v1h-2zM437 434h2v1h-2zM441 437h2v1h-2zM445 440h2v1h-2zM448 442h2v1h-2zM450 443h2v1h-2zM452 444h2v1h-2zM454 445h2v1h-2zM458 448h2v1h-2zM463 452h2v1h-2zM465 453h2v1h-2zM467 454h2v1h-2zM469 455h2v1h-2zM471 456h2v1h-2zM475 459h2v1h-2zM500 496h2v1h-2zM502 497h2v1h-2zM504 498h2v1h-2zM506 499h2v1h-2zM508 500h2v1h-2zM510 501h2v1h-2zM512 502h2v1h-2zM514 503h3v1h-3zM517 502h2v1h-2zM519 501h2v1h-2zM521 500h3v1h-3zM524 501h4v1h-4zM528 502h2v1h-2zM536 495h2v1h-2zM538 494h3v1h-3zM541 493h2v1h-2zM543 494h2v1h-2zM545 495h2v1h-2zM604 475h3v1h-3zM607 474h4v1h-4zM611 473h10v1h-10zM628 482h2v1h-2zM630 483h4v1h-4zM634 484h3v1h-3zM637 485h4v1h-4zM641 486h4v1h-4zM645 485h4v1h-4zM649 484h2v1h-2zM658 492h4v1h-4zM662 493h5v1h-5zM667 494h2v1h-2zM669 495h2v1h-2zM671 496h2v1h-2zM681 512h2v1h-2zM685 515h2v1h-2zM687 516h2v1h-2zM689 515h2v1h-2zM691 514h2v1h-2zM693 513h2v1h-2zM710 449h2v1h-2zM712 448h2v1h-2zM714 447h2v1h-2zM716 446h2v1h-2zM759 470h2v1h-2zM767 477h2v1h-2zM782 492h2v1h-2zM793 507h4v1h-4zM797 506h6v1h-6zM803 505h2v1h-2zM805 504h2v1h-2zM807 503h3v1h-3zM810 504h4v1h-4zM814 505h6v1h-6zM820 504h6v1h-6zM826 503h3v1h-3zM829 502h2v1h-2zM833 499h2v1h-2zM835 498h2v1h-2zM837 497h4v1h-4zM841 498h4v1h-4zM845 499h2v1h-2zM847 500h2v1h-2zM850 502h2v1h-2zM852 503h2v1h-2zM855 505h2v1h-2zM857 506h2v1h-2zM859 507h2v1h-2zM864 503h2v1h-2zM869 501h2v1h-2zM871 502h2v1h-2zM873 503h2v1h-2zM875 504h2v1h-2zM877 505h4v1h-4zM881 506h4v1h-4zM885 507h4v1h-4zM889 508h2v1h-2zM898 500h3v1h-3zM901 501h4v1h-4zM905 502h2v1h-2zM908 504h2v1h-2zM910 505h2v1h-2zM936 538h2v1h-2zM940 541h2v1h-2zM942 542h5v1h-5zM947 541h2v1h-2zM949 540h2v1h-2zM1004 457h2v1h-2zM1006 458h2v1h-2zM1008 459h2v1h-2zM1014 464h2v1h-2zM1018 467h4v1h-4zM1022 468h5v1h-5zM1028 470h2v1h-2zM1032 473h2v1h-2zM1042 481h2v1h-2zM1046 478h2v1h-2zM12 521h1v1h-1zM13 522h1v2h-1zM14 524h1v1h-1zM15 525h1v1h-1zM16 526h1v2h-1zM17 528h1v1h-1zM18 529h1v1h-1zM19 530h1v2h-1zM20 532h1v1h-1zM21 533h1v1h-1zM22 534h1v2h-1zM23 536h1v1h-1zM24 537h1v1h-1zM25 538h1v1h-1zM26 539h1v1h-1zM27 540h1v1h-1zM28 541h1v1h-1zM29 542h1v1h-1zM30 543h1v1h-1zM33 545h1v1h-1zM38 548h1v1h-1zM50 551h1v1h-1zM51 552h1v1h-1zM54 554h1v1h-1zM55 555h1v1h-1zM56 556h1v1h-1zM59 554h1v1h-1zM80 549h1v1h-1zM81 547h1v2h-1zM82 546h1v1h-1zM83 545h1v1h-1zM84 543h1v2h-1zM85 542h1v1h-1zM86 541h1v1h-1zM95 536h1v1h-1zM96 534h1v2h-1zM97 533h1v1h-1zM98 532h1v1h-1zM99 531h1v1h-1zM100 529h1v2h-1zM101 528h1v1h-1zM102 527h1v1h-1zM103 528h1v1h-1zM104 529h1v1h-1zM105 530h1v1h-1zM106 531h1v2h-1zM107 533h1v1h-1zM108 534h1v1h-1zM109 535h1v1h-1zM110 536h1v1h-1zM111 537h1v2h-1zM112 539h1v1h-1zM113 540h1v1h-1zM114 541h1v2h-1zM115 543h1v1h-1zM116 544h1v1h-1zM139 547h1v1h-1zM140 545h1v2h-1zM141 542h1v3h-1zM142 540h1v2h-1zM143 537h1v3h-1zM144 535h1v2h-1zM145 532h1v3h-1zM146 530h1v2h-1zM147 528h1v2h-1zM148 526h1v2h-1zM149 524h1v2h-1zM150 522h1v2h-1zM151 520h1v2h-1zM152 517h1v3h-1zM153 514h1v3h-1zM154 512h1v2h-1zM155 509h1v3h-1zM156 506h1v3h-1zM157 504h1v2h-1zM158 502h1v2h-1zM159 500h1v2h-1zM160 498h1v2h-1zM161 496h1v2h-1zM162 494h1v2h-1zM163 492h1v2h-1zM164 491h1v1h-1zM165 489h1v2h-1zM166 487h1v2h-1zM167 486h1v1h-1zM186 479h1v2h-1zM187 478h1v1h-1zM188 476h1v2h-1zM189 474h1v2h-1zM190 473h1v1h-1zM191 471h1v2h-1zM192 470h1v1h-1zM193 469h1v1h-1zM194 467h1v2h-1zM195 466h1v1h-1zM196 465h1v1h-1zM197 463h1v2h-1zM198 462h1v1h-1zM208 461h1v1h-1zM209 462h1v1h-1zM212 464h1v1h-1zM213 465h1v1h-1zM214 466h1v1h-1zM215 467h1v1h-1zM216 468h1v1h-1zM217 469h1v1h-1zM218 470h1v1h-1zM219 471h1v1h-1zM220 472h1v1h-1zM221 473h1v1h-1zM238 470h1v2h-1zM239 468h1v2h-1zM240 467h1v1h-1zM241 465h1v2h-1zM242 463h1v2h-1zM243 461h1v2h-1zM244 459h1v2h-1zM245 457h1v2h-1zM246 455h1v2h-1zM247 453h1v2h-1zM248 451h1v2h-1zM249 449h1v2h-1zM250 447h1v2h-1zM251 445h1v2h-1zM252 443h1v2h-1zM253 442h1v1h-1zM254 441h1v1h-1zM255 439h1v2h-1zM256 438h1v1h-1zM257 436h1v2h-1zM258 435h1v1h-1zM259 434h1v1h-1zM260 433h1v1h-1zM261 432h1v1h-1zM264 430h1v1h-1zM265 429h1v1h-1zM289 427h1v2h-1zM290 429h1v1h-1zM291 430h1v1h-1zM292 431h1v2h-1zM293 433h1v1h-1zM294 434h1v2h-1zM295 436h1v1h-1zM296 437h1v1h-1zM297 438h1v1h-1zM298 439h1v1h-1zM299 440h1v1h-1zM300 441h1v1h-1zM301 442h1v1h-1zM302 443h1v1h-1zM303 444h1v1h-1zM304 445h1v2h-1zM305 447h1v2h-1zM306 449h1v2h-1zM307 451h1v2h-1zM308 453h1v2h-1zM309 455h1v2h-1zM310 457h1v2h-1zM311 459h1v1h-1zM319 462h1v1h-1zM320 459h1v3h-1zM321 456h1v3h-1zM322 453h1v3h-1zM323 450h1v3h-1zM324 447h1v3h-1zM325 445h1v2h-1zM326 443h1v2h-1zM327 440h1v3h-1zM328 438h1v2h-1zM329 436h1v2h-1zM330 435h1v1h-1zM331 434h1v1h-1zM332 432h1v2h-1zM333 431h1v1h-1zM334 430h1v1h-1zM358 425h1v2h-1zM359 427h1v1h-1zM360 428h1v2h-1zM361 430h1v2h-1zM362 432h1v1h-1zM363 433h1v2h-1zM364 435h1v1h-1zM365 436h1v2h-1zM366 438h1v2h-1zM367 440h1v2h-1zM368 442h1v2h-1zM369 444h1v2h-1zM370 446h1v2h-1zM371 448h1v2h-1zM372 450h1v2h-1zM373 452h1v2h-1zM374 454h1v2h-1zM375 456h1v2h-1zM376 458h1v2h-1zM377 460h1v2h-1zM378 462h1v2h-1zM380 466h1v1h-1zM381 460h1v4h-1zM382 456h1v4h-1zM383 452h1v4h-1zM384 448h1v4h-1zM385 444h1v4h-1zM386 442h1v2h-1zM403 437h1v1h-1zM404 436h1v1h-1zM405 435h1v1h-1zM408 433h1v1h-1zM409 432h1v1h-1zM418 432h1v1h-1zM419 431h1v1h-1zM420 430h1v1h-1zM421 428h1v2h-1zM422 427h1v1h-1zM423 426h1v1h-1zM424 425h1v1h-1zM425 424h1v1h-1zM426 425h1v1h-1zM427 426h1v1h-1zM430 428h1v1h-1zM431 429h1v1h-1zM432 430h1v1h-1zM435 432h1v1h-1zM436 433h1v1h-1zM439 435h1v1h-1zM440 436h1v1h-1zM443 438h1v1h-1zM444 439h1v1h-1zM447 441h1v1h-1zM456 446h1v1h-1zM457 447h1v1h-1zM460 449h1v1h-1zM461 450h1v1h-1zM462 451h1v1h-1zM473 457h1v1h-1zM474 458h1v1h-1zM477 460h1v2h-1zM478 462h1v2h-1zM479 464h1v2h-1zM480 466h1v2h-1zM481 468h1v3h-1zM482 471h1v2h-1zM483 473h1v2h-1zM484 475h1v2h-1zM485 477h1v1h-1zM486 478h1v2h-1zM487 480h1v1h-1zM488 481h1v1h-1zM489 482h1v1h-1zM490 483h1v2h-1zM491 485h1v1h-1zM492 486h1v1h-1zM493 487h1v1h-1zM494 488h1v2h-1zM495 490h1v1h-1zM496 491h1v1h-1zM497 492h1v2h-1zM498 494h1v1h-1zM499 495h1v1h-1zM530 501h1v1h-1zM531 500h1v1h-1zM532 499h1v1h-1zM533 498h1v1h-1zM534 497h1v1h-1zM535 496h1v1h-1zM547 496h1v2h-1zM548 498h1v4h-1zM549 502h1v3h-1zM550 505h1v3h-1zM551 508h1v4h-1zM552 512h1v2h-1zM553 514h1v2h-1zM554 516h1v2h-1zM555 518h1v2h-1zM556 520h1v1h-1zM557 521h1v2h-1zM558 523h1v2h-1zM559 525h1v2h-1zM560 527h1v1h-1zM561 528h1v1h-1zM562 529h1v1h-1zM563 530h1v1h-1zM564 531h1v1h-1zM565 532h1v1h-1zM566 533h1v1h-1zM567 534h1v1h-1zM568 535h1v1h-1zM569 533h1v2h-1zM570 531h1v2h-1zM571 529h1v2h-1zM572 527h1v2h-1zM573 525h1v2h-1zM574 523h1v2h-1zM575 521h1v2h-1zM576 520h1v1h-1zM577 518h1v2h-1zM578 516h1v2h-1zM579 515h1v1h-1zM580 513h1v2h-1zM581 512h1v1h-1zM582 510h1v2h-1zM583 508h1v2h-1zM584 507h1v1h-1zM585 505h1v2h-1zM586 504h1v1h-1zM587 502h1v2h-1zM588 500h1v2h-1zM589 498h1v2h-1zM590 496h1v2h-1zM591 494h1v2h-1zM592 492h1v2h-1zM593 489h1v3h-1zM594 487h1v2h-1zM595 485h1v2h-1zM596 483h1v2h-1zM597 482h1v1h-1zM598 481h1v1h-1zM599 480h1v1h-1zM600 479h1v1h-1zM601 478h1v1h-1zM602 477h1v1h-1zM603 476h1v1h-1zM621 474h1v1h-1zM622 475h1v1h-1zM623 476h1v1h-1zM624 477h1v2h-1zM625 479h1v1h-1zM626 480h1v1h-1zM627 481h1v1h-1zM651 485h1v1h-1zM652 486h1v1h-1zM653 487h1v1h-1zM654 488h1v1h-1zM655 489h1v1h-1zM656 490h1v1h-1zM657 491h1v1h-1zM673 497h1v2h-1zM674 499h1v2h-1zM675 501h1v2h-1zM676 503h1v2h-1zM677 505h1v2h-1zM678 507h1v2h-1zM679 509h1v2h-1zM680 511h1v1h-1zM683 513h1v1h-1zM684 514h1v1h-1zM694 512h1v1h-1zM695 509h1v3h-1zM696 507h1v2h-1zM697 504h1v3h-1zM698 501h1v3h-1zM699 496h1v5h-1zM700 490h1v6h-1zM701 483h1v7h-1zM702 477h1v6h-1zM703 472h1v5h-1zM704 468h1v4h-1zM705 464h1v4h-1zM706 460h1v4h-1zM707 457h1v3h-1zM708 454h1v3h-1zM709 451h1v3h-1zM710 450h1v1h-1zM718 444h1v2h-1zM719 442h1v2h-1zM720 440h1v2h-1zM721 438h1v2h-1zM722 436h1v2h-1zM723 434h1v2h-1zM724 432h1v2h-1zM725 430h1v2h-1zM726 429h1v1h-1zM727 430h1v1h-1zM728 431h1v1h-1zM729 432h1v1h-1zM730 433h1v2h-1zM731 435h1v1h-1zM732 436h1v1h-1zM733 437h1v1h-1zM734 438h1v1h-1zM735 439h1v1h-1zM736 440h1v1h-1zM737 441h1v2h-1zM738 443h1v1h-1zM739 444h1v1h-1zM740 445h1v1h-1zM741 446h1v2h-1zM742 448h1v1h-1zM743 449h1v1h-1zM744 450h1v2h-1zM745 452h1v1h-1zM746 453h1v1h-1zM747 454h1v2h-1zM748 456h1v1h-1zM749 457h1v2h-1zM750 459h1v1h-1zM751 460h1v1h-1zM752 461h1v2h-1zM753 463h1v1h-1zM754 464h1v1h-1zM755 465h1v2h-1zM756 467h1v1h-1zM757 468h1v1h-1zM758 469h1v1h-1zM761 471h1v1h-1zM762 472h1v1h-1zM763 473h1v1h-1zM764 474h1v1h-1zM765 475h1v1h-1zM766 476h1v1h-1zM769 478h1v1h-1zM770 479h1v1h-1zM771 480h1v1h-1zM772 481h1v1h-1zM773 482h1v1h-1zM774 483h1v1h-1zM775 484h1v2h-1zM776 486h1v1h-1zM777 487h1v1h-1zM778 488h1v1h-1zM779 489h1v1h-1zM780 490h1v1h-1zM781 491h1v1h-1zM784 493h1v1h-1zM785 494h1v1h-1zM786 495h1v1h-1zM787 496h1v2h-1zM788 498h1v2h-1zM789 500h1v1h-1zM790 501h1v2h-1zM791 503h1v2h-1zM792 505h1v2h-1zM831 501h1v1h-1zM832 500h1v1h-1zM849 501h1v1h-1zM854 504h1v1h-1zM861 506h1v1h-1zM862 505h1v1h-1zM863 504h1v1h-1zM866 502h1v1h-1zM867 501h1v1h-1zM868 500h1v1h-1zM891 507h1v1h-1zM892 506h1v1h-1zM893 505h1v1h-1zM894 504h1v1h-1zM895 503h1v1h-1zM896 502h1v1h-1zM897 501h1v1h-1zM907 503h1v1h-1zM912 506h1v1h-1zM913 507h1v1h-1zM914 508h1v1h-1zM915 509h1v1h-1zM916 510h1v1h-1zM917 511h1v1h-1zM918 512h1v1h-1zM919 513h1v1h-1zM920 514h1v1h-1zM921 515h1v2h-1zM922 517h1v1h-1zM923 518h1v2h-1zM924 520h1v1h-1zM925 521h1v2h-1zM926 523h1v1h-1zM927 524h1v2h-1zM928 526h1v1h-1zM929 527h1v2h-1zM930 529h1v1h-1zM931 530h1v2h-1zM932 532h1v2h-1zM933 534h1v1h-1zM934 535h1v2h-1zM935 537h1v1h-1zM938 539h1v1h-1zM939 540h1v1h-1zM950 539h1v1h-1zM951 536h1v3h-1zM952 533h1v3h-1zM953 531h1v2h-1zM954 528h1v3h-1zM955 525h1v3h-1zM956 522h1v3h-1zM957 519h1v3h-1zM958 515h1v4h-1zM959 512h1v3h-1zM960 508h1v4h-1zM961 505h1v3h-1zM962 501h1v4h-1zM963 497h1v4h-1zM964 493h1v4h-1zM965 488h1v5h-1zM966 484h1v4h-1zM967 480h1v4h-1zM968 475h1v5h-1zM969 471h1v4h-1zM970 467h1v4h-1zM971 464h1v3h-1zM972 462h1v2h-1zM973 459h1v3h-1zM974 456h1v3h-1zM975 454h1v2h-1zM976 451h1v3h-1zM977 448h1v3h-1zM978 446h1v2h-1zM979 444h1v2h-1zM980 442h1v2h-1zM981 440h1v2h-1zM982 438h1v2h-1zM983 436h1v2h-1zM984 434h1v2h-1zM985 433h1v1h-1zM986 432h1v1h-1zM987 430h1v2h-1zM988 429h1v1h-1zM989 430h1v2h-1zM990 432h1v1h-1zM991 433h1v2h-1zM992 435h1v1h-1zM993 436h1v2h-1zM994 438h1v1h-1zM995 439h1v2h-1zM996 441h1v2h-1zM997 443h1v2h-1zM998 445h1v2h-1zM999 447h1v2h-1zM1000 449h1v2h-1zM1001 451h1v2h-1zM1002 453h1v2h-1zM1003 455h1v2h-1zM1010 460h1v1h-1zM1011 461h1v1h-1zM1012 462h1v1h-1zM1013 463h1v1h-1zM1016 465h1v1h-1zM1017 466h1v1h-1zM1027 469h1v1h-1zM1030 471h1v1h-1zM1031 472h1v1h-1zM1034 474h1v1h-1zM1035 475h1v1h-1zM1036 476h1v1h-1zM1037 477h1v1h-1zM1038 478h1v2h-1zM1039 480h1v1h-1zM1040 481h1v1h-1zM1041 482h1v1h-1zM1044 480h1v1h-1zM1045 479h1v1h-1zM1048 477h1v1h-1z" fill="#ffff00"/>
<path class="c" d="M4 547h2v1h-2zM6 546h2v1h-2zM8 545h2v1h-2zM10 544h2v1h-2zM13 546h2v1h-2zM34 567h2v1h-2zM39 571h2v1h-2zM41 572h4v1h-4zM45 573h5v1h-5zM50 574h2v1h-2zM52 575h3v1h-3zM55 576h3v1h-3zM58 575h4v1h-4zM62 574h4v1h-4zM66 573h4v1h-4zM70 572h4v1h-4zM74 571h4v1h-4zM78 570h2v1h-2zM88 561h2v1h-2zM92 558h2v1h-2zM98 553h2v1h-2zM102 550h4v1h-4zM106 549h4v1h-4zM110 550h2v1h-2zM114 553h2v1h-2zM116 554h2v1h-2zM118 555h2v1h-2zM120 556h2v1h-2zM122 557h2v1h-2zM124 558h10v1h-10zM134 557h4v1h-4zM138 556h2v1h-2zM173 473h2v1h-2zM175 472h2v1h-2zM177 471h3v1h-3zM180 472h4v1h-4zM184 473h3v1h-3zM187 472h2v1h-2zM189 471h2v1h-2zM191 470h2v1h-2zM193 469h2v1h-2zM195 468h2v1h-2zM197 467h2v1h-2zM199 466h9v1h-9zM237 504h2v1h-2zM239 505h4v1h-4zM243 506h5v1h-5zM248 505h8v1h-8zM256 506h5v1h-5zM261 507h4v1h-4zM265 508h4v1h-4zM269 509h2v1h-2zM271 510h2v1h-2zM273 511h2v1h-2zM318 587h2v1h-2zM341 550h2v1h-2zM343 549h2v1h-2zM345 548h3v1h-3zM348 547h10v1h-10zM358 548h2v1h-2zM362 551h2v1h-2zM387 566h2v1h-2zM390 564h2v1h-2zM392 563h2v1h-2zM395 561h2v1h-2zM397 560h2v1h-2zM399 559h2v1h-2zM401 558h2v1h-2zM403 557h2v1h-2zM405 556h2v1h-2zM407 555h2v1h-2zM409 554h4v1h-4zM413 553h5v1h-5zM418 552h2v1h-2zM420 551h2v1h-2zM422 550h2v1h-2zM424 549h5v1h-5zM429 548h4v1h-4zM433 549h2v1h-2zM435 550h2v1h-2zM437 551h2v1h-2zM440 553h2v1h-2zM443 555h2v1h-2zM445 556h2v1h-2zM449 559h2v1h-2zM453 562h2v1h-2zM466 576h2v1h-2zM471 580h2v1h-2zM475 583h2v1h-2zM500 615h2v1h-2zM503 617h2v1h-2zM505 618h2v1h-2zM508 620h2v1h-2zM511 622h2v1h-2zM513 623h2v1h-2zM515 624h4v1h-4zM519 625h7v1h-7zM526 626h4v1h-4zM530 625h2v1h-2zM533 623h2v1h-2zM535 622h2v1h-2zM538 620h2v1h-2zM540 619h2v1h-2zM542 618h2v1h-2zM544 617h2v1h-2zM546 616h3v1h-3zM549 615h5v1h-5zM554 614h2v1h-2zM556 613h3v1h-3zM559 612h2v1h-2zM564 608h2v1h-2zM608 513h2v1h-2zM613 509h2v1h-2zM615 508h2v1h-2zM617 507h2v1h-2zM619 506h2v1h-2zM621 507h2v1h-2zM624 509h2v1h-2zM626 510h2v1h-2zM628 511h2v1h-2zM630 512h4v1h-4zM634 513h3v1h-3zM637 514h2v1h-2zM639 515h3v1h-3zM642 516h5v1h-5zM647 517h4v1h-4zM683 555h2v1h-2zM688 559h2v1h-2zM690 560h2v1h-2zM692 561h2v1h-2zM696 560h2v1h-2zM721 521h2v1h-2zM726 517h2v1h-2zM728 518h4v1h-4zM732 519h3v1h-3zM735 520h3v1h-3zM738 521h2v1h-2zM759 541h2v1h-2zM765 546h2v1h-2zM769 549h2v1h-2zM780 559h2v1h-2zM785 563h2v1h-2zM789 566h2v1h-2zM793 569h2v1h-2zM795 570h3v1h-3zM798 571h4v1h-4zM802 572h4v1h-4zM806 573h4v1h-4zM810 574h3v1h-3zM813 575h2v1h-2zM819 580h2v1h-2zM830 592h2v1h-2zM832 593h2v1h-2zM834 594h3v1h-3zM837 595h3v1h-3zM840 596h4v1h-4zM844 597h3v1h-3zM847 598h4v1h-4zM851 599h6v1h-6zM857 600h4v1h-4zM870 590h2v1h-2zM874 587h2v1h-2zM877 585h2v1h-2zM879 584h2v1h-2zM881 583h2v1h-2zM883 582h2v1h-2zM885 581h2v1h-2zM887 580h3v1h-3zM890 579h2v1h-2zM914 542h2v1h-2zM917 540h2v1h-2zM919 539h2v1h-2zM921 538h2v1h-2zM923 539h2v1h-2zM925 540h2v1h-2zM927 541h2v1h-2zM943 560h2v1h-2zM945 561h2v1h-2zM947 562h2v1h-2zM949 563h2v1h-2zM987 496h5v1h-5zM994 499h2v1h-2zM1020 527h2v1h-2zM1024 530h2v1h-2zM1028 533h2v1h-2zM1032 536h2v1h-2zM1035 538h2v1h-2zM1037 539h2v1h-2zM1039 540h2v1h-2zM1041 541h8v1h-8zM3 548h1v1h-1zM12 545h1v1h-1zM15 547h1v1h-1zM16 548h1v1h-1zM17 549h1v1h-1zM18 550h1v1h-1zM19 551h1v1h-1zM20 552h1v1h-1zM21 553h1v1h-1zM22 554h1v1h-1zM23 555h1v1h-1zM24 556h1v1h-1zM25 557h1v1h-1zM26 558h1v1h-1zM27 559h1v2h-1zM28 561h1v1h-1zM29 562h1v1h-1zM30 563h1v1h-1zM31 564h1v1h-1zM32 565h1v1h-1zM33 566h1v1h-1zM36 568h1v1h-1zM37 569h1v1h-1zM38 570h1v1h-1zM80 569h1v1h-1zM81 568h1v1h-1zM82 567h1v1h-1zM83 566h1v1h-1zM84 565h1v1h-1zM85 564h1v1h-1zM86 563h1v1h-1zM87 562h1v1h-1zM90 560h1v1h-1zM91 559h1v1h-1zM94 557h1v1h-1zM95 556h1v1h-1zM96 555h1v1h-1zM97 554h1v1h-1zM100 552h1v1h-1zM101 551h1v1h-1zM112 551h1v1h-1zM113 552h1v1h-1zM140 554h1v2h-1zM141 552h1v2h-1zM142 550h1v2h-1zM143 548h1v2h-1zM144 545h1v3h-1zM145 541h1v4h-1zM146 538h1v3h-1zM147 535h1v3h-1zM148 531h1v4h-1zM149 527h1v4h-1zM150 523h1v4h-1zM151 520h1v3h-1zM152 518h1v2h-1zM153 515h1v3h-1zM154 512h1v3h-1zM155 509h1v3h-1zM156 505h1v4h-1zM157 502h1v3h-1zM158 499h1v3h-1zM159 496h1v3h-1zM160 494h1v2h-1zM161 491h1v3h-1zM162 488h1v3h-1zM163 486h1v2h-1zM164 484h1v2h-1zM165 483h1v1h-1zM166 481h1v2h-1zM167 479h1v2h-1zM168 478h1v1h-1zM169 477h1v1h-1zM170 476h1v1h-1zM171 475h1v1h-1zM172 474h1v1h-1zM208 467h1v1h-1zM209 468h1v1h-1zM210 469h1v1h-1zM211 470h1v1h-1zM212 471h1v1h-1zM213 472h1v1h-1zM214 473h1v1h-1zM215 474h1v2h-1zM216 476h1v1h-1zM217 477h1v1h-1zM218 478h1v2h-1zM219 480h1v1h-1zM220 481h1v1h-1zM221 482h1v2h-1zM222 484h1v1h-1zM223 485h1v1h-1zM224 486h1v1h-1zM225 487h1v1h-1zM226 488h1v2h-1zM227 490h1v1h-1zM228 491h1v1h-1zM229 492h1v1h-1zM230 493h1v2h-1zM231 495h1v1h-1zM232 496h1v2h-1zM233 498h1v1h-1zM234 499h1v2h-1zM235 501h1v1h-1zM236 502h1v2h-1zM275 512h1v1h-1zM276 513h1v1h-1zM277 514h1v1h-1zM278 515h1v1h-1zM279 516h1v1h-1zM280 517h1v1h-1zM281 518h1v1h-1zM282 519h1v1h-1zM283 520h1v1h-1zM284 521h1v1h-1zM285 522h1v1h-1zM286 523h1v1h-1zM287 524h1v1h-1zM288 525h1v1h-1zM289 526h1v2h-1zM290 528h1v2h-1zM291 530h1v3h-1zM292 533h1v2h-1zM293 535h1v2h-1zM294 537h1v3h-1zM295 540h1v2h-1zM296 542h1v2h-1zM297 544h1v2h-1zM298 546h1v2h-1zM299 548h1v2h-1zM300 550h1v2h-1zM301 552h1v2h-1zM302 554h1v2h-1zM303 556h1v2h-1zM304 558h1v2h-1zM305 560h1v2h-1zM306 562h1v3h-1zM307 565h1v2h-1zM308 567h1v2h-1zM309 569h1v3h-1zM310 572h1v2h-1zM311 574h1v2h-1zM312 576h1v2h-1zM313 578h1v2h-1zM314 580h1v1h-1zM315 581h1v2h-1zM316 583h1v1h-1zM317 584h1v2h-1zM318 586h1v1h-1zM319 588h1v1h-1zM320 585h1v2h-1zM321 583h1v2h-1zM322 581h1v2h-1zM323 578h1v3h-1zM324 576h1v2h-1zM325 574h1v2h-1zM326 572h1v2h-1zM327 570h1v2h-1zM328 568h1v2h-1zM329 566h1v2h-1zM330 565h1v1h-1zM331 563h1v2h-1zM332 561h1v2h-1zM333 559h1v2h-1zM334 558h1v1h-1zM335 557h1v1h-1zM336 556h1v1h-1zM337 555h1v1h-1zM338 553h1v2h-1zM339 552h1v1h-1zM340 551h1v1h-1zM360 549h1v1h-1zM361 550h1v1h-1zM364 552h1v1h-1zM365 553h1v1h-1zM366 554h1v2h-1zM367 556h1v1h-1zM368 557h1v1h-1zM369 558h1v1h-1zM370 559h1v2h-1zM371 561h1v1h-1zM372 562h1v1h-1zM373 563h1v2h-1zM374 565h1v2h-1zM375 567h1v1h-1zM376 568h1v2h-1zM377 570h1v1h-1zM378 571h1v2h-1zM379 573h1v2h-1zM380 575h1v1h-1zM381 574h1v1h-1zM382 572h1v2h-1zM383 571h1v1h-1zM384 570h1v1h-1zM385 568h1v2h-1zM386 567h1v1h-1zM389 565h1v1h-1zM394 562h1v1h-1zM439 552h1v1h-1zM442 554h1v1h-1zM447 557h1v1h-1zM448 558h1v1h-1zM451 560h1v1h-1zM452 561h1v1h-1zM455 563h1v1h-1zM456 564h1v1h-1zM457 565h1v2h-1zM458 567h1v1h-1zM459 568h1v1h-1zM460 569h1v2h-1zM461 571h1v1h-1zM462 572h1v1h-1zM463 573h1v1h-1zM464 574h1v1h-1zM465 575h1v1h-1zM468 577h1v1h-1zM469 578h1v1h-1zM470 579h1v1h-1zM473 581h1v1h-1zM474 582h1v1h-1zM477 584h1v1h-1zM478 585h1v2h-1zM479 587h1v1h-1zM480 588h1v2h-1zM481 590h1v2h-1zM482 592h1v1h-1zM483 593h1v2h-1zM484 595h1v1h-1zM485 596h1v1h-1zM486 597h1v2h-1zM487 599h1v1h-1zM488 600h1v1h-1zM489 601h1v1h-1zM490 602h1v2h-1zM491 604h1v1h-1zM492 605h1v1h-1zM493 606h1v1h-1zM494 607h1v2h-1zM495 609h1v1h-1zM496 610h1v1h-1zM497 611h1v2h-1zM498 613h1v1h-1zM499 614h1v1h-1zM502 616h1v1h-1zM507 619h1v1h-1zM510 621h1v1h-1zM532 624h1v1h-1zM537 621h1v1h-1zM561 611h1v1h-1zM562 610h1v1h-1zM563 609h1v1h-1zM566 607h1v1h-1zM567 606h1v1h-1zM568 604h1v2h-1zM569 602h1v2h-1zM570 599h1v3h-1zM571 597h1v2h-1zM572 594h1v3h-1zM573 592h1v2h-1zM574 589h1v3h-1zM575 586h1v3h-1zM576 583h1v3h-1zM577 581h1v2h-1zM578 578h1v3h-1zM579 575h1v3h-1zM580 572h1v3h-1zM581 569h1v3h-1zM582 567h1v2h-1zM583 565h1v2h-1zM584 563h1v2h-1zM585 561h1v2h-1zM586 559h1v2h-1zM587 557h1v2h-1zM588 555h1v2h-1zM589 553h1v2h-1zM590 550h1v3h-1zM591 546h1v4h-1zM592 543h1v3h-1zM593 539h1v4h-1zM594 536h1v3h-1zM595 532h1v4h-1zM596 530h1v2h-1zM597 528h1v2h-1zM598 526h1v2h-1zM599 525h1v1h-1zM600 523h1v2h-1zM601 522h1v1h-1zM602 520h1v2h-1zM603 518h1v2h-1zM604 517h1v1h-1zM605 516h1v1h-1zM606 515h1v1h-1zM607 514h1v1h-1zM610 512h1v1h-1zM611 511h1v1h-1zM612 510h1v1h-1zM623 508h1v1h-1zM651 518h1v1h-1zM652 519h1v2h-1zM653 521h1v1h-1zM654 522h1v1h-1zM655 523h1v1h-1zM656 524h1v2h-1zM657 526h1v1h-1zM658 527h1v1h-1zM659 528h1v1h-1zM660 529h1v1h-1zM661 530h1v1h-1zM662 531h1v2h-1zM663 533h1v1h-1zM664 534h1v1h-1zM665 535h1v1h-1zM666 536h1v1h-1zM667 537h1v1h-1zM668 538h1v1h-1zM669 539h1v1h-1zM670 540h1v1h-1zM671 541h1v1h-1zM672 542h1v1h-1zM673 543h1v1h-1zM674 544h1v1h-1zM675 545h1v2h-1zM676 547h1v1h-1zM677 548h1v1h-1zM678 549h1v2h-1zM679 551h1v1h-1zM680 552h1v1h-1zM681 553h1v1h-1zM682 554h1v1h-1zM685 556h1v1h-1zM686 557h1v1h-1zM687 558h1v1h-1zM694 562h1v1h-1zM695 561h1v1h-1zM698 559h1v1h-1zM699 557h1v2h-1zM700 555h1v2h-1zM701 552h1v3h-1zM702 550h1v2h-1zM703 547h1v3h-1zM704 545h1v2h-1zM705 543h1v2h-1zM706 541h1v2h-1zM707 539h1v2h-1zM708 537h1v2h-1zM709 535h1v2h-1zM710 533h1v2h-1zM711 532h1v1h-1zM712 531h1v1h-1zM713 530h1v1h-1zM714 528h1v2h-1zM715 527h1v1h-1zM716 526h1v1h-1zM717 525h1v1h-1zM718 524h1v1h-1zM719 523h1v1h-1zM720 522h1v1h-1zM723 520h1v1h-1zM724 519h1v1h-1zM725 518h1v1h-1zM740 522h1v1h-1zM741 523h1v1h-1zM742 524h1v1h-1zM743 525h1v1h-1zM744 526h1v1h-1zM745 527h1v1h-1zM746 528h1v1h-1zM747 529h1v1h-1zM748 530h1v1h-1zM749 531h1v1h-1zM750 532h1v1h-1zM751 533h1v1h-1zM752 534h1v1h-1zM753 535h1v1h-1zM754 536h1v1h-1zM755 537h1v1h-1zM756 538h1v1h-1zM757 539h1v1h-1zM758 540h1v1h-1zM761 542h1v1h-1zM762 543h1v1h-1zM763 544h1v1h-1zM764 545h1v1h-1zM767 547h1v1h-1zM768 548h1v1h-1zM771 550h1v1h-1zM772 551h1v1h-1zM773 552h1v1h-1zM774 553h1v1h-1zM775 554h1v1h-1zM776 555h1v1h-1zM777 556h1v1h-1zM778 557h1v1h-1zM779 558h1v1h-1zM782 560h1v1h-1zM783 561h1v1h-1zM784 562h1v1h-1zM787 564h1v1h-1zM788 565h1v1h-1zM791 567h1v1h-1zM792 568h1v1h-1zM815 576h1v1h-1zM816 577h1v1h-1zM817 578h1v1h-1zM818 579h1v1h-1zM821 581h1v1h-1zM822 582h1v1h-1zM823 583h1v1h-1zM824 584h1v1h-1zM825 585h1v2h-1zM826 587h1v1h-1zM827 588h1v1h-1zM828 589h1v2h-1zM829 591h1v1h-1zM861 599h1v1h-1zM862 598h1v1h-1zM863 597h1v1h-1zM864 596h1v1h-1zM865 595h1v1h-1zM866 594h1v1h-1zM867 593h1v1h-1zM868 592h1v1h-1zM869 591h1v1h-1zM872 589h1v1h-1zM873 588h1v1h-1zM876 586h1v1h-1zM891 578h1v1h-1zM892 576h1v2h-1zM893 574h1v2h-1zM894 571h1v3h-1zM895 569h1v2h-1zM896 567h1v2h-1zM897 565h1v2h-1zM898 563h1v2h-1zM899 561h1v2h-1zM900 559h1v2h-1zM901 558h1v1h-1zM902 556h1v2h-1zM903 555h1v1h-1zM904 553h1v2h-1zM905 551h1v2h-1zM906 550h1v1h-1zM907 549h1v1h-1zM908 548h1v1h-1zM909 547h1v1h-1zM910 546h1v1h-1zM911 545h1v1h-1zM912 544h1v1h-1zM913 543h1v1h-1zM916 541h1v1h-1zM929 542h1v2h-1zM930 544h1v1h-1zM931 545h1v2h-1zM932 547h1v1h-1zM933 548h1v2h-1zM934 550h1v1h-1zM935 551h1v2h-1zM936 553h1v1h-1zM937 554h1v1h-1zM938 555h1v1h-1zM939 556h1v1h-1zM940 557h1v1h-1zM941 558h1v1h-1zM942 559h1v1h-1zM951 561h1v2h-1zM952 560h1v1h-1zM953 559h1v1h-1zM954 557h1v2h-1zM955 556h1v1h-1zM956 554h1v2h-1zM957 552h1v2h-1zM958 550h1v2h-1zM959 548h1v2h-1zM960 546h1v2h-1zM961 543h1v3h-1zM962 541h1v2h-1zM963 539h1v2h-1zM964 537h1v2h-1zM965 534h1v3h-1zM966 531h1v3h-1zM967 529h1v2h-1zM968 526h1v3h-1zM969 523h1v3h-1zM970 521h1v2h-1zM971 518h1v3h-1zM972 516h1v2h-1zM973 514h1v2h-1zM974 512h1v2h-1zM975 511h1v1h-1zM976 509h1v2h-1zM977 508h1v1h-1zM978 506h1v2h-1zM979 504h1v2h-1zM980 503h1v1h-1zM981 502h1v1h-1zM982 501h1v1h-1zM983 500h1v1h-1zM984 499h1v1h-1zM985 498h1v1h-1zM986 497h1v1h-1zM992 497h1v1h-1zM993 498h1v1h-1zM996 500h1v1h-1zM997 501h1v1h-1zM998 502h1v2h-1zM999 504h1v1h-1zM1000 505h1v1h-1zM1001 506h1v2h-1zM1002 508h1v1h-1zM1003 509h1v2h-1zM1004 511h1v1h-1zM1005 512h1v1h-1zM1006 513h1v1h-1zM1007 514h1v1h-1zM1008 515h1v1h-1zM1009 516h1v1h-1zM1010 517h1v1h-1zM1011 518h1v1h-1zM1012 519h1v1h-1zM1013 520h1v1h-1zM1014 521h1v1h-1zM1015 522h1v1h-1zM1016 523h1v1h-1zM1017 524h1v1h-1zM1018 525h1v1h-1zM1019 526h1v1h-1zM1022 528h1v1h-1zM1023 529h1v1h-1zM1026 531h1v1h-1zM1027 532h1v1h-1zM1030 534h1v1h-1zM1031 535h1v1h-1zM1034 537h1v1h-1z" fill="#ffffff"/>
<rect class="c" x="46" y="571" width="5" height="4" fill="#fff"/>
<rect class="c" x="91" y="555" width="5" height="4" fill="#fff"/>
<rect class="c" x="137" y="554" width="5" height="4" fill="#fff"/>
<rect class="c" x="182" y="471" width="5" height="4" fill="#fff"/>
<rect class="c" x="227" y="490" width="5" height="4" fill="#fff"/>
<rect class="c" x="272" y="509" width="5" height="4" fill="#fff"/>
<rect class="c" x="317" y="586" width="5" height="4" fill="#fff"/>
<rect class="c" x="362" y="550" width="5" height="4" fill="#fff"/>
<rect class="c" x="407" y="552" width="5" height="4" fill="#fff"/>
<rect class="c" x="452" y="561" width="5" height="4" fill="#fff"/>
<rect class="c" x="497" y="612" width="5" height="4" fill="#fff"/>
<rect class="c" x="543" y="614" width="5" height="4" fill="#fff"/>
<rect class="c" x="588" y="549" width="5" height="4" fill="#fff"/>
<rect class="c" x="633" y="511" width="5" height="4" fill="#fff"/>
<rect class="c" x="678" y="550" width="5" height="4" fill="#fff"/>
<rect class="c" x="723" y="515" width="5" height="4" fill="#fff"/>
<rect class="c" x="768" y="548" width="5" height="4" fill="#fff"/>
<rect class="c" x="813" y="574" width="5" height="4" fill="#fff"/>
<rect class="c" x="858" y="598" width="5" height="4" fill="#fff"/>
<rect class="c" x="903" y="548" width="5" height="4" fill="#fff"/>
<rect class="c" x="948" y="561" width="5" height="4" fill="#fff"/>
<rect class="c" x="994" y="499" width="5" height="4" fill="#fff"/>
<rect class="c" x="1039" y="539" width="5" height="4" fill="#fff"/>
<rect class="c" x="91" y="449" width="5" height="80" fill="#5080ff"/>
<text x="96" y="492" fill="#ffff00">财</text>
<rect class="c" x="152" y="449" width="5" height="80" fill="#8c00ff"/>
<text x="157" y="492" fill="#ffff00">财</text>
<rect class="c" x="249" y="449" width="5" height="80" fill="#5080ff"/>
<text x="254" y="492" fill="#ffff00">财</text>
<rect class="c" x="325" y="449" width="5" height="80" fill="#5080ff"/>
<text x="330" y="492" fill="#ffff00">财</text>
<rect class="c" x="385" y="449" width="5" height="80" fill="#5080ff"/>
<text x="390" y="492" fill="#ffff00">财</text>
<rect class="c" x="535" y="449" width="5" height="80" fill="#5080ff"/>
<text x="540" y="492" fill="#ffff00">财</text>
<rect class="c" x="573" y="449" width="5" height="80" fill="#5080ff"/>
<text x="578" y="492" fill="#ffff00">财</text>
<rect class="c" x="700" y="449" width="5" height="80" fill="#8c00ff"/>
<text x="705" y="492" fill="#ffff00">财</text>
<rect class="c" x="828" y="449" width="5" height="80" fill="#8c00ff"/>
<text x="833" y="492" fill="#ffff00">财</text>
<rect class="c" x="963" y="449" width="5" height="80" fill="#8c00ff"/>
<text x="968" y="492" fill="#ffff00">财</text>
<text x="3" y="551.9" fill="#00ff00">1</text>
<text x="11" y="547.98" fill="#00ff00">2</text>
<text x="18" y="553.5" fill="#00ff00">3</text>
<text x="26" y="562.076" fill="#ffff00">1</text>
<text x="33" y="569.045" fill="#ffff00">2</text>
<text x="41" y="575.158" fill="#ffff00">3</text>
<text x="56" y="579.336" fill="#ffff00">5</text>
<text x="78" y="573.497" fill="#ffff00">8</text>
<text x="93" y="560.736" fill="#00ff00">1</text>
<text x="101" y="553.737" fill="#00ff00">2</text>
<text x="109" y="552.8" fill="#00ff00">3</text>
<text x="124" y="560.734" fill="#ffff00">1</text>
<text x="131" y="561.1" fill="#ffff00">2</text>
<text x="139" y="559.622" fill="#00ff00">1</text>
<text x="146" y="541.543" fill="#00ff00">2</text>
<text x="154" y="516.616" fill="#00ff00">3</text>
<text x="169" y="480.21" fill="#00ff00">5</text>
<text x="191" y="473.95" fill="#00ff00">8</text>
<text x="229" y="495.372" fill="#00ff00">13</text>
<text x="289" y="533.445" fill="#00ff00">21</text>
<text x="304" y="562.134" fill="#ffff00">1</text>
<text x="311" y="577.332" fill="#ffff00">2</text>
<text x="319" y="591.31" fill="#ffff00">3</text>
<text x="334" y="561.784" fill="#ffff00">5</text>
<text x="342" y="552.955" fill="#00ff00">1</text>
<text x="349" y="550.1" fill="#00ff00">2</text>
<text x="357" y="550.1" fill="#00ff00">3</text>
<text x="372" y="566.513" fill="#ffff00">1</text>
<text x="379" y="577.888" fill="#ffff00">2</text>
<text x="387" y="570.367" fill="#ffff00">3</text>
<text x="402" y="561.676" fill="#ffff00">5</text>
<text x="409" y="557.756" fill="#00ff00">1</text>
<text x="417" y="556.69" fill="#00ff00">2</text>
<text x="424" y="553.015" fill="#00ff00">3</text>
<text x="439" y="555.599" fill="#00ff00">5</text>
<text x="447" y="560.906" fill="#ffff00">1</text>
<text x="454" y="565.719" fill="#ffff00">2</text>
<text x="462" y="575.955" fill="#ffff00">3</text>
<text x="477" y="587.301" fill="#ffff00">5</text>
<text x="499" y="616.748" fill="#ffff00">8</text>
<text x="537" y="624.538" fill="#ffff00">13</text>
<text x="590" y="554.616" fill="#00ff00">1</text>
<text x="597" y="532.06" fill="#00ff00">2</text>
<text x="605" y="519.15" fill="#00ff00">3</text>
<text x="620" y="510.067" fill="#00ff00">5</text>
<text x="642" y="518.984" fill="#00ff00">8</text>
<text x="680" y="554.763" fill="#00ff00">13</text>
<text x="687" y="562.076" fill="#ffff00">1</text>
<text x="695" y="564.606" fill="#ffff00">2</text>
<text x="702" y="554.995" fill="#00ff00">1</text>
<text x="710" y="537.7" fill="#00ff00">2</text>
<text x="717" y="528.603" fill="#00ff00">3</text>
<text x="732" y="522.333" fill="#00ff00">5</text>
<text x="755" y="540.88" fill="#00ff00">8</text>
<text x="778" y="560.113" fill="#ffff00">1</text>
<text x="785" y="566.586" fill="#ffff00">2</text>
<text x="793" y="572.493" fill="#ffff00">3</text>
<text x="808" y="576.247" fill="#ffff00">5</text>
<text x="830" y="594.757" fill="#ffff00">8</text>
<text x="868" y="595.2" fill="#ffff00">13</text>
<text x="905" y="554.54" fill="#00ff00">1</text>
<text x="913" y="546.396" fill="#00ff00">2</text>
<text x="920" y="542.214" fill="#00ff00">3</text>
<text x="935" y="555.68" fill="#00ff00">5</text>
<text x="943" y="563.321" fill="#ffff00">1</text>
<text x="950" y="566.086" fill="#ffff00">2</text>
<text x="958" y="555.145" fill="#00ff00">1</text>
<text x="965" y="537.599" fill="#00ff00">2</text>
<text x="973" y="518.133" fill="#00ff00">3</text>
<text x="988" y="499.871" fill="#00ff00">5</text>
<text x="1011" y="521.603" fill="#00ff00">8</text>
<text x="1048" y="544.4" fill="#00ff00">13</text>
<text x="63" y="554" fill="#e8b8a0">底</text>
<text x="146" y="554" fill="#e8b8a0">底</text>
<text x="958" y="554" fill="#e8b8a0">底</text>
<text x="4" y="643" fill="#ff3232">2024年</text>
<rect class="c" x="108" y="630" width="1" height="16" fill="#c00000"/>
<text x="109.8" y="643" fill="#ff3232">1</text>
<rect class="c" x="243" y="630" width="1" height="16" fill="#c00000"/>
<text x="244.8" y="643" fill="#ff3232">2</text>
<rect class="c" x="378" y="630" width="1" height="16" fill="#c00000"/>
<text x="379.8" y="643" fill="#ff3232">3</text>
<rect class="c" x="536" y="630" width="1" height="16" fill="#c00000"/>
<text x="537.8" y="643" fill="#ff3232">4</text>
<rect class="c" x="694" y="630" width="1" height="16" fill="#c00000"/>
<text x="695.8" y="643" fill="#ff3232">5</text>
<rect class="c" x="837" y="630" width="1" height="16" fill="#c00000"/>
<text x="838.8" y="643" fill="#ff3232">6</text>
<rect class="c" x="142" y="630" width="1" height="4" fill="#c00000"/>
<rect class="c" x="176" y="630" width="1" height="4" fill="#c00000"/>
<rect class="c" x="209" y="630" width="1" height="4" fill="#c00000"/>
<rect class="c" x="277" y="630" width="1" height="4" fill="#c00000"/>
<rect class="c" x="311" y="630" width="1" height="4" fill="#c00000"/>
<rect class="c" x="344" y="630" width="1" height="4" fill="#c00000"/>
<rect class="c" x="418" y="630" width="1" height="4" fill="#c00000"/>
<rect class="c" x="457" y="630" width="1" height="4" fill="#c00000"/>
<rect class="c" x="497" y="630" width="1" height="4" fill="#c00000"/>
<rect class="c" x="576" y="630" width="1" height="4" fill="#c00000"/>
<rect class="c" x="615" y="630" width="1" height="4" fill="#c00000"/>
<rect class="c" x="655" y="630" width="1" height="4" fill="#c00000"/>
<rect class="c" x="730" y="630" width="1" height="4" fill="#c00000"/>
<rect class="c" x="766" y="630" width="1" height="4" fill="#c00000"/>
<rect class="c" x="801" y="630" width="1" height="4" fill="#c00000"/>
<rect class="c" x="875" y="630" width="1" height="4" fill="#c00000"/>
<rect class="c" x="895" y="630" width="1" height="16" fill="#c00000"/>
<rect class="c" x="896" y="631" width="75" height="15" fill="#000080"/>
<text x="897" y="643" fill="#e8e8e8">2025/06/13/五</text>
<rect class="c" x="42" y="646" width="1" height="4" fill="#c00000"/>
<rect class="c" x="73" y="646" width="1" height="4" fill="#c00000"/>
<rect class="c" x="115" y="646" width="1" height="4" fill="#c00000"/>
<rect class="c" x="144" y="646" width="1" height="4" fill="#c00000"/>
<rect class="c" x="177" y="646" width="1" height="4" fill="#c00000"/>
<rect class="c" x="207" y="646" width="1" height="4" fill="#c00000"/>
<rect class="c" x="241" y="646" width="1" height="4" fill="#c00000"/>
<rect class="c" x="282" y="646" width="1" height="4" fill="#c00000"/>
<rect class="c" x="309" y="646" width="1" height="4" fill="#c00000"/>
<rect class="c" x="333" y="646" width="1" height="4" fill="#c00000"/>
<rect class="c" x="364" y="646" width="1" height="4" fill="#c00000"/>
<rect class="c" x="390" y="646" width="1" height="4" fill="#c00000"/>
<rect class="c" x="423" y="646" width="1" height="4" fill="#c00000"/>
<rect class="c" x="448" y="646" width="1" height="4" fill="#c00000"/>
<rect class="c" x="480" y="646" width="1" height="4" fill="#c00000"/>
<rect class="c" x="508" y="646" width="1" height="4" fill="#c00000"/>
<rect class="c" x="535" y="646" width="1" height="4" fill="#c00000"/>
<rect class="c" x="568" y="646" width="1" height="4" fill="#c00000"/>
<rect class="c" x="599" y="646" width="1" height="4" fill="#c00000"/>
<rect class="c" x="628" y="646" width="1" height="4" fill="#c00000"/>
<rect class="c" x="661" y="646" width="1" height="4" fill="#c00000"/>
<rect class="c" x="690" y="646" width="1" height="4" fill="#c00000"/>
<rect class="c" x="735" y="646" width="1" height="4" fill="#c00000"/>
<rect class="c" x="766" y="646" width="1" height="4" fill="#c00000"/>
<rect class="c" x="808" y="646" width="1" height="4" fill="#c00000"/>
<rect class="c" x="840" y="646" width="1" height="4" fill="#c00000"/>
<rect class="c" x="871" y="646" width="1" height="4" fill="#c00000"/>
<rect class="c" x="8" y="648" width="1" height="2" fill="#d0d0d0"/>
<rect class="c" x="11" y="648" width="1" height="2" fill="#d0d0d0"/>
<rect class="c" x="15" y="648" width="1" height="2" fill="#d0d0d0"/>
<rect class="c" x="19" y="648" width="1" height="2" fill="#d0d0d0"/>
<rect class="c" x="51" y="648" width="1" height="2" fill="#d0d0d0"/>
<rect class="c" x="846" y="648" width="6" height="2" fill="#40e0e0"/><rect class="c" x="856" y="648" width="9" height="2" fill="#40e0e0"/><rect class="c" x="828" y="648" width="1" height="2" fill="#d0d0d0"/>
<rect class="c" x="971" y="600" width="159" height="50" fill="#3a3434"/>
<text x="1050.5" y="621.5" fill="#ffffff" text-anchor="middle" style="font-size:18px" font-weight="bold">指标公式网</text>
<text x="1054" y="641" fill="#ffffff" text-anchor="middle" style="font-size:14.5px" letter-spacing="1.15">www.zbgs3.com</text>
<rect class="c" x="1127" y="25" width="3" height="1" fill="#c00000"/>
<rect class="c" x="1127" y="45" width="3" height="1" fill="#c00000"/>
<rect class="c" x="1129" y="31" width="1" height="1" fill="#d0d0d0"/>
<rect class="c" x="1129" y="35" width="1" height="1" fill="#d0d0d0"/>
<rect class="c" x="1129" y="37" width="1" height="1" fill="#d0d0d0"/>
</svg></body></html>
